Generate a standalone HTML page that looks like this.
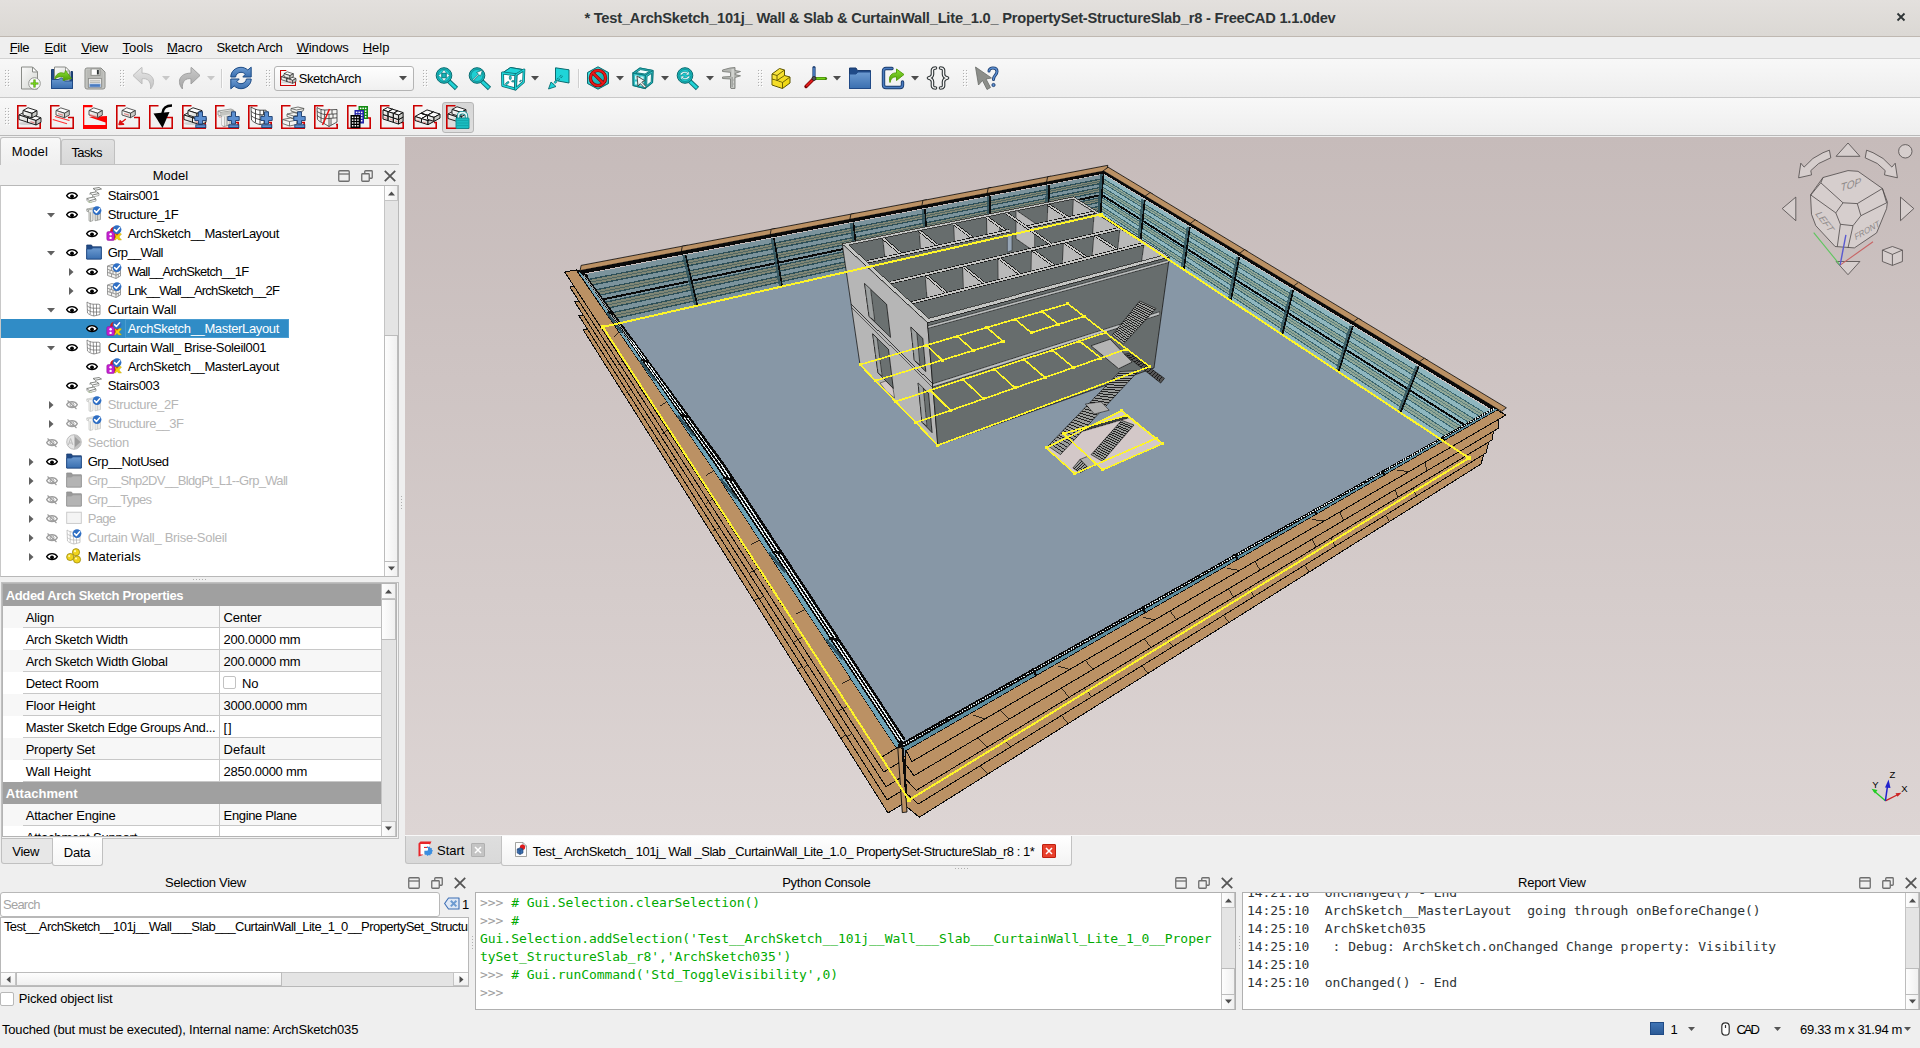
<!DOCTYPE html>
<html><head><meta charset="utf-8"><title>FreeCAD</title>
<style>
*{box-sizing:border-box}
html,body{margin:0;padding:0}
body{width:1920px;height:1048px;overflow:hidden;background:#efefef;position:relative;font-family:"Liberation Sans",sans-serif;font-size:13px;color:#000;letter-spacing:-0.2px}
.a{position:absolute;white-space:nowrap}
.t{position:absolute;white-space:nowrap;line-height:16px;height:16px}
.mono{font-family:"DejaVu Sans Mono","Liberation Mono",monospace;font-size:13px;letter-spacing:-0.045px}
u{text-decoration:underline;text-underline-offset:1px}
svg{position:absolute;overflow:visible}
.dis{color:#b4b4b4}
</style></head><body>
<div class="a" style="left:0;top:0;width:1920px;height:37px;background:linear-gradient(#e3e0dd,#dbd8d4);border-bottom:1px solid #bfb8b1"></div>
<div class="t" style="left:584.4px;top:8px;letter-spacing:-0.222px;font-size:14.67px;font-weight:bold;line-height:20px;height:20px;color:#2e3436;">* Test_ArchSketch_101j_ Wall &amp; Slab &amp; CurtainWall_Lite_1.0_ PropertySet-StructureSlab_r8 - FreeCAD 1.1.0dev</div>
<svg style="left:1896px;top:12px" width="10" height="10"><path d="M1.5 1.5 L8.5 8.5 M8.5 1.5 L1.5 8.5" stroke="#2e3436" stroke-width="1.8" fill="none"/></svg>
<div class="a" style="left:0;top:37px;width:1920px;height:22px;background:#efefef;border-bottom:1px solid #d2d2d2"></div>
<div class="t" style="left:9.8px;top:40px;letter-spacing:-0.384px;"><u>F</u>ile</div>
<div class="t" style="left:44.5px;top:40px;letter-spacing:-0.169px;"><u>E</u>dit</div>
<div class="t" style="left:81.2px;top:40px;letter-spacing:-0.351px;"><u>V</u>iew</div>
<div class="t" style="left:122.5px;top:40px;letter-spacing:0.01px;"><u>T</u>ools</div>
<div class="t" style="left:166.9px;top:40px;letter-spacing:-0.131px;"><u>M</u>acro</div>
<div class="t" style="left:216.5px;top:40px;letter-spacing:-0.317px;">Sketch Arch</div>
<div class="t" style="left:296.7px;top:40px;letter-spacing:-0.125px;"><u>W</u>indows</div>
<div class="t" style="left:362.7px;top:40px;letter-spacing:-0.017px;"><u>H</u>elp</div>
<div class="a" style="left:0;top:59px;width:1920px;height:39px;background:linear-gradient(#f8f8f8,#eeeeee);border-bottom:1px solid #c8c8c8"></div>
<div class="a" style="left:0;top:98px;width:1920px;height:38px;background:linear-gradient(#f8f8f8,#eeeeee);border-bottom:1px solid #b9b9b9"></div>
<svg width="0" height="0" style="left:0;top:0"><defs>
<linearGradient id="gPaper" x1="0" y1="0" x2="1" y2="1"><stop offset="0" stop-color="#fafafa"/><stop offset="1" stop-color="#d4d6d2"/></linearGradient>
<linearGradient id="gBlue" x1="0" y1="0" x2="0" y2="1"><stop offset="0" stop-color="#6d9bd1"/><stop offset="1" stop-color="#3a6fb0"/></linearGradient>
<linearGradient id="gGreen" x1="0" y1="0" x2="0" y2="1"><stop offset="0" stop-color="#8ae234"/><stop offset="1" stop-color="#4e9a06"/></linearGradient>
<linearGradient id="gTeal" x1="0" y1="0" x2="1" y2="1"><stop offset="0" stop-color="#34e0e2"/><stop offset="1" stop-color="#06989a"/></linearGradient>
<linearGradient id="gYel" x1="0" y1="0" x2="1" y2="1"><stop offset="0" stop-color="#fce94f"/><stop offset="1" stop-color="#edd400"/></linearGradient>
<linearGradient id="gGrey" x1="0" y1="0" x2="0" y2="1"><stop offset="0" stop-color="#e6e6e6"/><stop offset="1" stop-color="#c4c4c4"/></linearGradient>
<linearGradient id="gGrey2" x1="0" y1="0" x2="0" y2="1"><stop offset="0" stop-color="#c8c8c8"/><stop offset="1" stop-color="#a6a6a6"/></linearGradient>
<linearGradient id="gBrick" x1="0" y1="0" x2="1" y2="1"><stop offset="0" stop-color="#ffffff"/><stop offset="1" stop-color="#cfd0cc"/></linearGradient>
</defs></svg>
<svg style="left:5px;top:70px" width="5" height="18" viewBox="0 0 5 18"><rect x="0" y="0" width="1" height="1" fill="#b0b0b0"/><rect x="1" y="1" width="1" height="1" fill="#ffffff"/><rect x="3" y="0" width="1" height="1" fill="#b0b0b0"/><rect x="4" y="1" width="1" height="1" fill="#ffffff"/><rect x="0" y="3" width="1" height="1" fill="#b0b0b0"/><rect x="1" y="4" width="1" height="1" fill="#ffffff"/><rect x="3" y="3" width="1" height="1" fill="#b0b0b0"/><rect x="4" y="4" width="1" height="1" fill="#ffffff"/><rect x="0" y="6" width="1" height="1" fill="#b0b0b0"/><rect x="1" y="7" width="1" height="1" fill="#ffffff"/><rect x="3" y="6" width="1" height="1" fill="#b0b0b0"/><rect x="4" y="7" width="1" height="1" fill="#ffffff"/><rect x="0" y="9" width="1" height="1" fill="#b0b0b0"/><rect x="1" y="10" width="1" height="1" fill="#ffffff"/><rect x="3" y="9" width="1" height="1" fill="#b0b0b0"/><rect x="4" y="10" width="1" height="1" fill="#ffffff"/><rect x="0" y="12" width="1" height="1" fill="#b0b0b0"/><rect x="1" y="13" width="1" height="1" fill="#ffffff"/><rect x="3" y="12" width="1" height="1" fill="#b0b0b0"/><rect x="4" y="13" width="1" height="1" fill="#ffffff"/><rect x="0" y="15" width="1" height="1" fill="#b0b0b0"/><rect x="1" y="16" width="1" height="1" fill="#ffffff"/><rect x="3" y="15" width="1" height="1" fill="#b0b0b0"/><rect x="4" y="16" width="1" height="1" fill="#ffffff"/></svg>
<svg style="left:17px;top:66px" width="24" height="24" viewBox="0 0 24 24"><path d="M4.5 1 H15.5 L20.5 6 V23 H4.5 Z" fill="url(#gPaper)" stroke="#8a8c88" stroke-width="1"/>
<path d="M15.5 1 V6 H20.5 Z" fill="#ffffff" stroke="#8a8c88" stroke-width="1" stroke-linejoin="round"/>
<circle cx="17.5" cy="17.5" r="5.8" fill="#fbfbfb" stroke="#8a8c88" stroke-width="0.9"/>
<path d="M17.5 13.6 V21.4 M13.6 17.5 H21.4" stroke="#4e9a06" stroke-width="2.2"/>
<path d="M17.5 14.2 V20.8 M14.2 17.5 H20.8" stroke="#73d216" stroke-width="1"/></svg>
<svg style="left:50px;top:66px" width="24" height="24" viewBox="0 0 24 24"><path d="M1.5 3.5 H5 V14 H21 V5.5 H22.5 V22.5 H1.5 Z" fill="#204a87" stroke="#1b3c6e" stroke-width="1"/>
<path d="M4.5 1 H15.5 L19.5 5 V16 H4.5 Z" fill="url(#gPaper)" stroke="#8a8c88" stroke-width="1"/>
<path d="M15.5 1 V5 H19.5 Z" fill="#fff" stroke="#8a8c88" stroke-width="0.8"/>
<path d="M1.5 13.5 H8 C9.5 13.5 10 12 11.5 12 C13 12 13.5 15 15 15 H22.5 V22.5 H1.5 Z" fill="url(#gBlue)" stroke="#204a87" stroke-width="1"/>
<path d="M5 13 C5.5 8 10 5.5 14.5 7.5 L15.5 4.5 L21.5 12.5 L13 14.5 L13.8 11.5 C11 10 8 10.5 5 13 Z" fill="url(#gGreen)" stroke="#4e9a06" stroke-width="0.8" stroke-linejoin="round"/></svg>
<svg style="left:83px;top:66px" width="24" height="24" viewBox="0 0 24 24"><path d="M4 2 H18 L22 6 V21 Q22 23 20 23 H4 Q2 23 2 21 V4 Q2 2 4 2 Z" fill="#b9bab6" stroke="#8a8c88" stroke-width="1"/>
<path d="M3.2 3.2 H17.6 L20.8 6.4 V21.8 H3.2 Z" fill="none" stroke="#c9cac6" stroke-width="0.8"/>
<rect x="8" y="3" width="9" height="6.5" fill="#d9dad6" stroke="#8a8c88" stroke-width="0.8"/>
<rect x="9" y="3.6" width="4.5" height="5" fill="#fff"/>
<rect x="14" y="4" width="1.8" height="4.4" fill="#2e3436"/>
<rect x="5.5" y="12.5" width="13" height="9" fill="#e9e9e7" stroke="#8a8c88" stroke-width="0.8"/>
<path d="M7 14.8 H17 M7 16.4 H17" stroke="#b0b1ad" stroke-width="0.9"/>
<rect x="6.8" y="18" width="10.4" height="3" fill="#4a7cc0" stroke="#8fb0dd" stroke-width="0.6"/></svg>
<svg style="left:120px;top:70px" width="5" height="18" viewBox="0 0 5 18"><rect x="0" y="0" width="1" height="1" fill="#b0b0b0"/><rect x="1" y="1" width="1" height="1" fill="#ffffff"/><rect x="3" y="0" width="1" height="1" fill="#b0b0b0"/><rect x="4" y="1" width="1" height="1" fill="#ffffff"/><rect x="0" y="3" width="1" height="1" fill="#b0b0b0"/><rect x="1" y="4" width="1" height="1" fill="#ffffff"/><rect x="3" y="3" width="1" height="1" fill="#b0b0b0"/><rect x="4" y="4" width="1" height="1" fill="#ffffff"/><rect x="0" y="6" width="1" height="1" fill="#b0b0b0"/><rect x="1" y="7" width="1" height="1" fill="#ffffff"/><rect x="3" y="6" width="1" height="1" fill="#b0b0b0"/><rect x="4" y="7" width="1" height="1" fill="#ffffff"/><rect x="0" y="9" width="1" height="1" fill="#b0b0b0"/><rect x="1" y="10" width="1" height="1" fill="#ffffff"/><rect x="3" y="9" width="1" height="1" fill="#b0b0b0"/><rect x="4" y="10" width="1" height="1" fill="#ffffff"/><rect x="0" y="12" width="1" height="1" fill="#b0b0b0"/><rect x="1" y="13" width="1" height="1" fill="#ffffff"/><rect x="3" y="12" width="1" height="1" fill="#b0b0b0"/><rect x="4" y="13" width="1" height="1" fill="#ffffff"/><rect x="0" y="15" width="1" height="1" fill="#b0b0b0"/><rect x="1" y="16" width="1" height="1" fill="#ffffff"/><rect x="3" y="15" width="1" height="1" fill="#b0b0b0"/><rect x="4" y="16" width="1" height="1" fill="#ffffff"/></svg>
<svg style="left:132px;top:66px" width="24" height="24" viewBox="0 0 24 24"><path d="M9.5 1.5 L1 9.5 L10 18 V12.8 C15 11.8 19.5 15 18.5 23 C24 17 22.5 7 10 7.2 V1.5 Z" fill="url(#gGrey)" stroke="#bdbdbd" stroke-width="1" stroke-linejoin="round"/></svg>
<svg style="left:162px;top:76px" width="8" height="5" viewBox="0 0 8 5"><path d="M0 0 H8 L4 4.5 Z" fill="#c8c8c8"/></svg>
<svg style="left:177px;top:66px" width="24" height="24" viewBox="0 0 24 24"><path d="M14.5 1.5 L23 9.5 L14 18 V12.8 C9 11.8 4.5 15 5.5 23 C0 17 1.5 7 14 7.2 V1.5 Z" fill="url(#gGrey2)" stroke="#a0a0a0" stroke-width="1" stroke-linejoin="round"/></svg>
<svg style="left:207px;top:76px" width="8" height="5" viewBox="0 0 8 5"><path d="M0 0 H8 L4 4.5 Z" fill="#c8c8c8"/></svg>
<div class="a" style="left:221px;top:69px;width:1px;height:19px;background:#cfcfcf"></div><div class="a" style="left:222px;top:69px;width:1px;height:19px;background:#fbfbfb"></div>
<svg style="left:229px;top:66px" width="24" height="24" viewBox="0 0 24 24"><path d="M1.8 11 C1.8 5.5 6.5 1.3 12 1.3 C14.6 1.3 17 2.4 18.8 4 L22.2 1.2 V11 H13.8 L16.3 8.2 C15.2 7 13.6 6.3 12 6.3 C9 6.3 6.9 8.4 6.6 11 Z" fill="url(#gBlue)" stroke="#1b4a85" stroke-width="1" stroke-linejoin="round"/>
<path d="M22.2 13 C22.2 18.5 17.5 22.7 12 22.7 C9.4 22.7 7 21.6 5.2 20 L1.8 22.8 V13 H10.2 L7.7 15.8 C8.8 17 10.4 17.7 12 17.7 C15 17.7 17.1 15.6 17.4 13 Z" fill="url(#gBlue)" stroke="#1b4a85" stroke-width="1" stroke-linejoin="round"/></svg>
<svg style="left:266px;top:70px" width="5" height="18" viewBox="0 0 5 18"><rect x="0" y="0" width="1" height="1" fill="#b0b0b0"/><rect x="1" y="1" width="1" height="1" fill="#ffffff"/><rect x="3" y="0" width="1" height="1" fill="#b0b0b0"/><rect x="4" y="1" width="1" height="1" fill="#ffffff"/><rect x="0" y="3" width="1" height="1" fill="#b0b0b0"/><rect x="1" y="4" width="1" height="1" fill="#ffffff"/><rect x="3" y="3" width="1" height="1" fill="#b0b0b0"/><rect x="4" y="4" width="1" height="1" fill="#ffffff"/><rect x="0" y="6" width="1" height="1" fill="#b0b0b0"/><rect x="1" y="7" width="1" height="1" fill="#ffffff"/><rect x="3" y="6" width="1" height="1" fill="#b0b0b0"/><rect x="4" y="7" width="1" height="1" fill="#ffffff"/><rect x="0" y="9" width="1" height="1" fill="#b0b0b0"/><rect x="1" y="10" width="1" height="1" fill="#ffffff"/><rect x="3" y="9" width="1" height="1" fill="#b0b0b0"/><rect x="4" y="10" width="1" height="1" fill="#ffffff"/><rect x="0" y="12" width="1" height="1" fill="#b0b0b0"/><rect x="1" y="13" width="1" height="1" fill="#ffffff"/><rect x="3" y="12" width="1" height="1" fill="#b0b0b0"/><rect x="4" y="13" width="1" height="1" fill="#ffffff"/><rect x="0" y="15" width="1" height="1" fill="#b0b0b0"/><rect x="1" y="16" width="1" height="1" fill="#ffffff"/><rect x="3" y="15" width="1" height="1" fill="#b0b0b0"/><rect x="4" y="16" width="1" height="1" fill="#ffffff"/></svg>
<div class="a" style="left:274px;top:66px;width:140px;height:25px;border:1px solid #b4b4b4;border-radius:3px;background:linear-gradient(#fefefe,#f0f0f0)"></div>
<div class="t" style="left:298.7px;top:71px;letter-spacing:-0.42px;">SketchArch</div>
<svg style="left:398.5px;top:76px" width="8" height="5" viewBox="0 0 8 5"><path d="M0 0 H8 L4 4.5 Z" fill="#4d4d4d"/></svg>
<svg style="left:423px;top:70px" width="5" height="18" viewBox="0 0 5 18"><rect x="0" y="0" width="1" height="1" fill="#b0b0b0"/><rect x="1" y="1" width="1" height="1" fill="#ffffff"/><rect x="3" y="0" width="1" height="1" fill="#b0b0b0"/><rect x="4" y="1" width="1" height="1" fill="#ffffff"/><rect x="0" y="3" width="1" height="1" fill="#b0b0b0"/><rect x="1" y="4" width="1" height="1" fill="#ffffff"/><rect x="3" y="3" width="1" height="1" fill="#b0b0b0"/><rect x="4" y="4" width="1" height="1" fill="#ffffff"/><rect x="0" y="6" width="1" height="1" fill="#b0b0b0"/><rect x="1" y="7" width="1" height="1" fill="#ffffff"/><rect x="3" y="6" width="1" height="1" fill="#b0b0b0"/><rect x="4" y="7" width="1" height="1" fill="#ffffff"/><rect x="0" y="9" width="1" height="1" fill="#b0b0b0"/><rect x="1" y="10" width="1" height="1" fill="#ffffff"/><rect x="3" y="9" width="1" height="1" fill="#b0b0b0"/><rect x="4" y="10" width="1" height="1" fill="#ffffff"/><rect x="0" y="12" width="1" height="1" fill="#b0b0b0"/><rect x="1" y="13" width="1" height="1" fill="#ffffff"/><rect x="3" y="12" width="1" height="1" fill="#b0b0b0"/><rect x="4" y="13" width="1" height="1" fill="#ffffff"/><rect x="0" y="15" width="1" height="1" fill="#b0b0b0"/><rect x="1" y="16" width="1" height="1" fill="#ffffff"/><rect x="3" y="15" width="1" height="1" fill="#b0b0b0"/><rect x="4" y="16" width="1" height="1" fill="#ffffff"/></svg>
<svg style="left:434px;top:66px" width="24" height="24" viewBox="0 0 24 24"><path d="M14.8 15.2 L22.5 22.5" stroke="#0b6b70" stroke-width="4.6" stroke-linecap="butt"/>
<path d="M15 15.4 L22 22" stroke="#22d3d6" stroke-width="2.8" stroke-linecap="butt"/>
<circle cx="10" cy="9.5" r="7.8" fill="#16b4b8" stroke="#0b6b70" stroke-width="1"/>
<circle cx="10" cy="9.5" r="6" fill="#1fcfd3" stroke="#0e8b90" stroke-width="0.8"/><path d="M10 3.8 L12.4 7 H7.6 Z M10 15.2 L12.4 12 H7.6 Z M4.3 9.5 L7.5 7.1 V11.9 Z M15.7 9.5 L12.5 7.1 V11.9 Z" fill="#fff" stroke="#0b6b70" stroke-width="0.5"/>
<rect x="8" y="7.5" width="4" height="4" fill="#16b4b8" stroke="#0b6b70" stroke-width="0.5"/></svg>
<svg style="left:467px;top:66px" width="24" height="24" viewBox="0 0 24 24"><path d="M14.8 15.2 L22.5 22.5" stroke="#0b6b70" stroke-width="4.6" stroke-linecap="butt"/>
<path d="M15 15.4 L22 22" stroke="#22d3d6" stroke-width="2.8" stroke-linecap="butt"/>
<circle cx="10" cy="9.5" r="7.8" fill="#16b4b8" stroke="#0b6b70" stroke-width="1"/>
<circle cx="10" cy="9.5" r="6" fill="#1fcfd3" stroke="#0e8b90" stroke-width="0.8"/><path d="M5.5 14 L11.5 8 L9.5 6.5 L15.5 4 L13.5 10.2 L12.3 8.8 L6.3 14.8 Z" fill="#fff" stroke="#0b6b70" stroke-width="0.7" stroke-linejoin="round"/></svg>
<svg style="left:501px;top:66px" width="24" height="24" viewBox="0 0 24 24"><path d="M1.5 7 L9.5 1.5 L23 3.8 L22.5 16 L14.5 23 L1.8 19.5 Z" fill="#ffffff" stroke="#0b6b70" stroke-width="1" stroke-linejoin="round"/>
<path d="M1.5 7 L9.5 1.5 L23 3.8 L15 8.8 Z" fill="#1fd5d8" stroke="#0b6b70" stroke-width="1" stroke-linejoin="round"/>
<path d="M1.5 7 L15 8.8 L14.5 23 L1.8 19.5 Z" fill="none" stroke="#0b6b70" stroke-width="3" stroke-linejoin="round"/>
<path d="M1.5 7 L15 8.8 L14.5 23 L1.8 19.5 Z" fill="none" stroke="#1fd5d8" stroke-width="1.5" stroke-linejoin="round"/>
<path d="M15 8.8 L23 3.8 L22.5 16 L14.5 23 Z" fill="none" stroke="#0b6b70" stroke-width="2.6" stroke-linejoin="round"/>
<path d="M15 8.8 L23 3.8 L22.5 16 L14.5 23 Z" fill="none" stroke="#1fd5d8" stroke-width="1.2" stroke-linejoin="round"/>
<ellipse cx="9.3" cy="11.8" rx="1" ry="2" fill="#1fd5d8" stroke="#0b6b70" stroke-width="0.7"/>
<ellipse cx="6.3" cy="17" rx="2" ry="0.9" transform="rotate(-35 6.3 17)" fill="#1fd5d8" stroke="#0b6b70" stroke-width="0.7"/>
<ellipse cx="12" cy="15.3" rx="1.5" ry="0.7" fill="#1fd5d8" stroke="#0b6b70" stroke-width="0.7"/>
<ellipse cx="19.5" cy="15" rx="1.2" ry="0.6" transform="rotate(-35 19.5 15)" fill="#1fd5d8" stroke="#0b6b70" stroke-width="0.6"/></svg>
<svg style="left:531px;top:76px" width="8" height="5" viewBox="0 0 8 5"><path d="M0 0 H8 L4 4.5 Z" fill="#4d4d4d"/></svg>
<svg style="left:547px;top:66px" width="24" height="24" viewBox="0 0 24 24"><path d="M8.5 1.8 L22 3.8 V17 L8.5 14.5 Z" fill="#1fd5d8" stroke="#0b6b70" stroke-width="1" stroke-linejoin="round"/>
<path d="M15 9.5 L6 18.5" stroke="#0b6b70" stroke-width="2.4" stroke-dasharray="2.6 1.4"/>
<path d="M15 9.5 L6 18.5" stroke="#1fd5d8" stroke-width="1.1" stroke-dasharray="2.6 1.4"/>
<path d="M1.5 23 L4 16 L9 20.5 Z" fill="#1fd5d8" stroke="#0b6b70" stroke-width="0.9" stroke-linejoin="round"/></svg>
<div class="a" style="left:578px;top:69px;width:1px;height:19px;background:#cfcfcf"></div><div class="a" style="left:579px;top:69px;width:1px;height:19px;background:#fbfbfb"></div>
<svg style="left:586px;top:66px" width="24" height="24" viewBox="0 0 24 24"><path d="M12 0.8 L22.5 6.5 V17.5 L12 23.2 L1.5 17.5 V6.5 Z" fill="url(#gTeal)" stroke="#0b6b70" stroke-width="1" stroke-linejoin="round"/>
<path d="M12 2.5 L21 7.3 V16.7 L12 21.5 L3 16.7 V7.3 Z" fill="none" stroke="#5eeaec" stroke-width="0.7"/>
<circle cx="12" cy="12" r="7.6" fill="none" stroke="#7a0000" stroke-width="3.3"/>
<path d="M6.8 6.8 L17.2 17.2" stroke="#7a0000" stroke-width="3.3"/>
<circle cx="12" cy="12" r="7.6" fill="none" stroke="#e81818" stroke-width="2.1"/>
<path d="M6.8 6.8 L17.2 17.2" stroke="#e81818" stroke-width="2.1"/></svg>
<svg style="left:616px;top:76px" width="8" height="5" viewBox="0 0 8 5"><path d="M0 0 H8 L4 4.5 Z" fill="#4d4d4d"/></svg>
<svg style="left:631px;top:66px" width="24" height="24" viewBox="0 0 24 24"><path d="M2 7 L9 2 L22 4.5 L21.5 16.5 L14 22.5 L2.2 19.5 Z" fill="#f4ffff" stroke="#0a767b" stroke-width="1.2" stroke-linejoin="round"/>
<path d="M2 7 L14.5 9.2 L14 22.5 L2.2 19.5 Z" fill="#35c3c7" stroke="#0a767b" stroke-width="1.2"/>
<path d="M2 7 L9 2 L22 4.5 L14.5 9.2 Z M4.8 6.6 L9.6 3.6 L18.6 5.2 L14 8 Z" fill="#35c3c7" fill-rule="evenodd" stroke="#0a767b" stroke-width="0.9"/>
<path d="M14.5 9.2 L22 4.5 L21.5 16.5 L14 22.5 Z M16 10.4 L15.7 19.6 L20.2 15.8 L20.5 7.4 Z" fill="#35c3c7" fill-rule="evenodd" stroke="#0a767b" stroke-width="0.9"/>
<path d="M4 9.6 H7.6 V13.4 H4 Z M9.4 10.4 H12.6 V13.4 H9.4 Z M4 15.6 H6.6 V18.6 H4 Z M9.6 16 H12.4 V20 H9.6 Z" fill="#c9f6f7"/>
<path d="M6 10 L7 20 L9.3 17.6 L13.5 22 L15 20.5 L10.8 16.2 L13.6 14.6 Z" fill="#f4f4f4" stroke="#3c3e3b" stroke-width="0.9" stroke-linejoin="round"/></svg>
<svg style="left:661px;top:76px" width="8" height="5" viewBox="0 0 8 5"><path d="M0 0 H8 L4 4.5 Z" fill="#4d4d4d"/></svg>
<svg style="left:675px;top:66px" width="24" height="24" viewBox="0 0 24 24"><path d="M14.8 15.2 L22.5 22.5" stroke="#0b6b70" stroke-width="4.6" stroke-linecap="butt"/>
<path d="M15 15.4 L22 22" stroke="#22d3d6" stroke-width="2.8" stroke-linecap="butt"/>
<circle cx="10" cy="9.5" r="7.8" fill="#16b4b8" stroke="#0b6b70" stroke-width="1"/>
<circle cx="10" cy="9.5" r="6" fill="#1fcfd3" stroke="#0e8b90" stroke-width="0.8"/><path d="M5 9 C5.5 5.5 10 4.5 12.5 6.5 L14 5 V9 H10.5 L11.8 7.6 C10 6.6 7.6 7 7 9 Z M15 10 C14.5 13.5 10 14.5 7.5 12.5 L6 14 V10 H9.5 L8.2 11.4 C10 12.4 12.4 12 13 10 Z" fill="#e8ffff" stroke="#0b6b70" stroke-width="0.5"/></svg>
<svg style="left:706px;top:76px" width="8" height="5" viewBox="0 0 8 5"><path d="M0 0 H8 L4 4.5 Z" fill="#4d4d4d"/></svg>
<svg style="left:721px;top:66px" width="24" height="24" viewBox="0 0 24 24"><path d="M1.5 4 L9 2 L14 1.5 V4.5 L19.5 5.5 L14 7.5 V8.6 L19.5 9.8 L14 11.5 V22.5 H10 L9.5 22 V13 L1.5 12.5 V11 L9.5 10.5 V6.3 L1.5 5.5 Z" fill="#b5b7b3" stroke="#7d7f7b" stroke-width="0.9" stroke-linejoin="round"/>
<path d="M10.5 3 H13 V21.5 H10.5 Z" fill="#d0d2ce"/>
<path d="M10.5 12 H12 M10.5 14 H12.5 M10.5 16 H12 M10.5 18 H12.5 M10.5 20 H12" stroke="#555753" stroke-width="0.7"/></svg>
<svg style="left:758px;top:70px" width="5" height="18" viewBox="0 0 5 18"><rect x="0" y="0" width="1" height="1" fill="#b0b0b0"/><rect x="1" y="1" width="1" height="1" fill="#ffffff"/><rect x="3" y="0" width="1" height="1" fill="#b0b0b0"/><rect x="4" y="1" width="1" height="1" fill="#ffffff"/><rect x="0" y="3" width="1" height="1" fill="#b0b0b0"/><rect x="1" y="4" width="1" height="1" fill="#ffffff"/><rect x="3" y="3" width="1" height="1" fill="#b0b0b0"/><rect x="4" y="4" width="1" height="1" fill="#ffffff"/><rect x="0" y="6" width="1" height="1" fill="#b0b0b0"/><rect x="1" y="7" width="1" height="1" fill="#ffffff"/><rect x="3" y="6" width="1" height="1" fill="#b0b0b0"/><rect x="4" y="7" width="1" height="1" fill="#ffffff"/><rect x="0" y="9" width="1" height="1" fill="#b0b0b0"/><rect x="1" y="10" width="1" height="1" fill="#ffffff"/><rect x="3" y="9" width="1" height="1" fill="#b0b0b0"/><rect x="4" y="10" width="1" height="1" fill="#ffffff"/><rect x="0" y="12" width="1" height="1" fill="#b0b0b0"/><rect x="1" y="13" width="1" height="1" fill="#ffffff"/><rect x="3" y="12" width="1" height="1" fill="#b0b0b0"/><rect x="4" y="13" width="1" height="1" fill="#ffffff"/><rect x="0" y="15" width="1" height="1" fill="#b0b0b0"/><rect x="1" y="16" width="1" height="1" fill="#ffffff"/><rect x="3" y="15" width="1" height="1" fill="#b0b0b0"/><rect x="4" y="16" width="1" height="1" fill="#ffffff"/></svg>
<svg style="left:770px;top:66px" width="24" height="24" viewBox="0 0 24 24"><path d="M2 8 L9.5 2.5 L14.5 4 V9.5 L20 11 V17 L12.5 22.5 L2 19 Z" fill="url(#gYel)" stroke="#5e5600" stroke-width="1" stroke-linejoin="round"/>
<path d="M2 8 L7 9.5 L14.5 4 M7 9.5 V14.5 L2 13 M7 14.5 L12.5 16.5 L20 11 M12.5 16.5 V22.5 M7 14.5 L14.5 9.5" fill="none" stroke="#5e5600" stroke-width="0.9" stroke-linejoin="round"/>
<path d="M2.8 13.8 L11.8 16.8 V21.4 L2.8 18.4 Z" fill="#f5dc28" opacity="0.8"/></svg>
<svg style="left:803px;top:66px" width="24" height="24" viewBox="0 0 24 24"><path d="M11 12.5 L3 20.5" stroke="#7a0000" stroke-width="3.4" stroke-linecap="round"/><path d="M11 12.5 L3.2 20.3" stroke="#e01b1b" stroke-width="2"/>
<path d="M11 12.5 H22.5" stroke="#3d7a06" stroke-width="3.2" stroke-linecap="round"/><path d="M11 12.5 H22.3" stroke="#73d216" stroke-width="1.8"/>
<path d="M11 12.5 V1.5" stroke="#1b3c6e" stroke-width="3.2" stroke-linecap="round"/><path d="M11 12.5 V1.7" stroke="#4a7cc0" stroke-width="1.8"/>
<circle cx="11" cy="12.5" r="2" fill="#555" stroke="#222" stroke-width="0.8"/></svg>
<svg style="left:833px;top:76px" width="8" height="5" viewBox="0 0 8 5"><path d="M0 0 H8 L4 4.5 Z" fill="#4d4d4d"/></svg>
<svg style="left:848px;top:66px" width="24" height="24" viewBox="0 0 24 24"><path d="M1.5 2 H8 L9.5 4.5 H22.5 V22.5 H1.5 Z" fill="#204a87" stroke="#1b3c6e" stroke-width="1" stroke-linejoin="round"/>
<path d="M1.5 8 H8 L9.8 6 H22.5 V22.5 H1.5 Z" fill="url(#gBlue)" stroke="#204a87" stroke-width="1" stroke-linejoin="round"/></svg>
<svg style="left:881px;top:66px" width="24" height="24" viewBox="0 0 24 24"><path d="M11 2.5 H5 Q2.5 2.5 2.5 5 V19 Q2.5 21.5 5 21.5 H19 Q21.5 21.5 21.5 19 V16" fill="none" stroke="#1b3c6e" stroke-width="3.4" stroke-linecap="round"/>
<path d="M11 2.5 H5 Q2.5 2.5 2.5 5 V19 Q2.5 21.5 5 21.5 H19 Q21.5 21.5 21.5 19 V16" fill="none" stroke="#4a7cc0" stroke-width="1.6" stroke-linecap="round"/>
<path d="M9 16.5 C7 10 11 6.5 15.5 7 V3 L23 8.5 L15.5 14.5 V11 C12.5 10.5 10 12 9 16.5 Z" fill="url(#gGreen)" stroke="#4e9a06" stroke-width="0.9" stroke-linejoin="round"/></svg>
<svg style="left:911px;top:76px" width="8" height="5" viewBox="0 0 8 5"><path d="M0 0 H8 L4 4.5 Z" fill="#4d4d4d"/></svg>
<svg style="left:926px;top:66px" width="24" height="24" viewBox="0 0 24 24"><path d="M9.5 2 C5.5 2 6.5 5 6.5 8 C6.5 10.5 5 11.5 2.5 12 C5 12.5 6.5 13.5 6.5 16 C6.5 19 5.5 22 9.5 22" fill="none" stroke="#2e3436" stroke-width="3.6" stroke-linecap="round" stroke-linejoin="round"/>
<path d="M9.5 2 C5.5 2 6.5 5 6.5 8 C6.5 10.5 5 11.5 2.5 12 C5 12.5 6.5 13.5 6.5 16 C6.5 19 5.5 22 9.5 22" fill="none" stroke="#f4f4f4" stroke-width="1.4" stroke-linecap="round" stroke-linejoin="round"/>
<path d="M14.5 2 C18.5 2 17.5 5 17.5 8 C17.5 10.5 19 11.5 21.5 12 C19 12.5 17.5 13.5 17.5 16 C17.5 19 18.5 22 14.5 22" fill="none" stroke="#2e3436" stroke-width="3.6" stroke-linecap="round" stroke-linejoin="round"/>
<path d="M14.5 2 C18.5 2 17.5 5 17.5 8 C17.5 10.5 19 11.5 21.5 12 C19 12.5 17.5 13.5 17.5 16 C17.5 19 18.5 22 14.5 22" fill="none" stroke="#f4f4f4" stroke-width="1.4" stroke-linecap="round" stroke-linejoin="round"/></svg>
<svg style="left:963px;top:70px" width="5" height="18" viewBox="0 0 5 18"><rect x="0" y="0" width="1" height="1" fill="#b0b0b0"/><rect x="1" y="1" width="1" height="1" fill="#ffffff"/><rect x="3" y="0" width="1" height="1" fill="#b0b0b0"/><rect x="4" y="1" width="1" height="1" fill="#ffffff"/><rect x="0" y="3" width="1" height="1" fill="#b0b0b0"/><rect x="1" y="4" width="1" height="1" fill="#ffffff"/><rect x="3" y="3" width="1" height="1" fill="#b0b0b0"/><rect x="4" y="4" width="1" height="1" fill="#ffffff"/><rect x="0" y="6" width="1" height="1" fill="#b0b0b0"/><rect x="1" y="7" width="1" height="1" fill="#ffffff"/><rect x="3" y="6" width="1" height="1" fill="#b0b0b0"/><rect x="4" y="7" width="1" height="1" fill="#ffffff"/><rect x="0" y="9" width="1" height="1" fill="#b0b0b0"/><rect x="1" y="10" width="1" height="1" fill="#ffffff"/><rect x="3" y="9" width="1" height="1" fill="#b0b0b0"/><rect x="4" y="10" width="1" height="1" fill="#ffffff"/><rect x="0" y="12" width="1" height="1" fill="#b0b0b0"/><rect x="1" y="13" width="1" height="1" fill="#ffffff"/><rect x="3" y="12" width="1" height="1" fill="#b0b0b0"/><rect x="4" y="13" width="1" height="1" fill="#ffffff"/><rect x="0" y="15" width="1" height="1" fill="#b0b0b0"/><rect x="1" y="16" width="1" height="1" fill="#ffffff"/><rect x="3" y="15" width="1" height="1" fill="#b0b0b0"/><rect x="4" y="16" width="1" height="1" fill="#ffffff"/></svg>
<svg style="left:974px;top:66px" width="24" height="24" viewBox="0 0 24 24"><path d="M1.5 1 L4.5 19 L8.5 14.5 L13 23.5 L16.5 21.5 L12 13 L17.5 12 Z" fill="#8c8e8a" stroke="#6a6c68" stroke-width="0.8" stroke-linejoin="round"/>
<path d="M15 5 C15 1 23 1 23 5.5 C23 9 19.5 9 19.5 13.5" fill="none" stroke="#1b3c6e" stroke-width="3" stroke-linecap="round"/>
<path d="M15 5 C15 1 23 1 23 5.5 C23 9 19.5 9 19.5 13.5" fill="none" stroke="#5c8fd0" stroke-width="1.4" stroke-linecap="round"/>
<circle cx="19.5" cy="19" r="1.6" fill="#5c8fd0" stroke="#1b3c6e" stroke-width="0.9"/></svg>
<svg style="left:5px;top:108px" width="5" height="18" viewBox="0 0 5 18"><rect x="0" y="0" width="1" height="1" fill="#b0b0b0"/><rect x="1" y="1" width="1" height="1" fill="#ffffff"/><rect x="3" y="0" width="1" height="1" fill="#b0b0b0"/><rect x="4" y="1" width="1" height="1" fill="#ffffff"/><rect x="0" y="3" width="1" height="1" fill="#b0b0b0"/><rect x="1" y="4" width="1" height="1" fill="#ffffff"/><rect x="3" y="3" width="1" height="1" fill="#b0b0b0"/><rect x="4" y="4" width="1" height="1" fill="#ffffff"/><rect x="0" y="6" width="1" height="1" fill="#b0b0b0"/><rect x="1" y="7" width="1" height="1" fill="#ffffff"/><rect x="3" y="6" width="1" height="1" fill="#b0b0b0"/><rect x="4" y="7" width="1" height="1" fill="#ffffff"/><rect x="0" y="9" width="1" height="1" fill="#b0b0b0"/><rect x="1" y="10" width="1" height="1" fill="#ffffff"/><rect x="3" y="9" width="1" height="1" fill="#b0b0b0"/><rect x="4" y="10" width="1" height="1" fill="#ffffff"/><rect x="0" y="12" width="1" height="1" fill="#b0b0b0"/><rect x="1" y="13" width="1" height="1" fill="#ffffff"/><rect x="3" y="12" width="1" height="1" fill="#b0b0b0"/><rect x="4" y="13" width="1" height="1" fill="#ffffff"/><rect x="0" y="15" width="1" height="1" fill="#b0b0b0"/><rect x="1" y="16" width="1" height="1" fill="#ffffff"/><rect x="3" y="15" width="1" height="1" fill="#b0b0b0"/><rect x="4" y="16" width="1" height="1" fill="#ffffff"/></svg>
<div class="a" style="left:442px;top:102px;width:32px;height:31px;border:1px solid #b6b6b6;border-radius:3px;background:linear-gradient(#d6d6d6,#dedede)"></div>
<svg style="left:17px;top:105px" width="24" height="24" viewBox="0 0 24 24"><path d="M9.5 0.8 H0.8 V23.2 H23.2 V17.5 H20" fill="none" stroke="#cc0000" stroke-width="1.6" stroke-linejoin="miter"/><path d="M2 10 L10.5 12.72 L15.5 9.97 L7 7.25 Z" fill="#fcfcfc" stroke="#111" stroke-width="0.9" stroke-linejoin="round"/><path d="M2 10 L10.5 12.72 V17.22 L2 14.5 Z" fill="url(#gBrick)" stroke="#111" stroke-width="0.9" stroke-linejoin="round"/><path d="M10.5 12.72 L15.5 9.97 V14.47 L10.5 17.22 Z" fill="#c9cac6" stroke="#111" stroke-width="0.9" stroke-linejoin="round"/><path d="M10.5 12.8 L19.0 15.520000000000001 L24.0 12.770000000000001 L15.5 10.05 Z" fill="#fcfcfc" stroke="#111" stroke-width="0.9" stroke-linejoin="round"/><path d="M10.5 12.8 L19.0 15.520000000000001 V20.020000000000003 L10.5 17.3 Z" fill="url(#gBrick)" stroke="#111" stroke-width="0.9" stroke-linejoin="round"/><path d="M19.0 15.520000000000001 L24.0 12.770000000000001 V17.270000000000003 L19.0 20.020000000000003 Z" fill="#c9cac6" stroke="#111" stroke-width="0.9" stroke-linejoin="round"/><path d="M6 5.5 L15 8.379999999999999 L20 5.629999999999999 L11 2.75 Z" fill="#fcfcfc" stroke="#111" stroke-width="0.9" stroke-linejoin="round"/><path d="M6 5.5 L15 8.379999999999999 V12.879999999999999 L6 10.0 Z" fill="url(#gBrick)" stroke="#111" stroke-width="0.9" stroke-linejoin="round"/><path d="M15 8.379999999999999 L20 5.629999999999999 V10.129999999999999 L15 12.879999999999999 Z" fill="#c9cac6" stroke="#111" stroke-width="0.9" stroke-linejoin="round"/><path d="M13.5 16.6 L17.5 17.9" stroke="#e05050" stroke-width="0.7"/><ellipse cx="9" cy="18.5" rx="7" ry="1.6" fill="#000" opacity="0.12"/></svg>
<svg style="left:50px;top:105px" width="24" height="24" viewBox="0 0 24 24"><path d="M9.5 0.8 H0.8 V23.2 H23.2 V12.5 H18" fill="none" stroke="#cc0000" stroke-width="1.6" stroke-linejoin="miter"/><path d="M5 11.5 L19.5 15.5 M2.8 14.5 L17 18.8" stroke="#ff3030" stroke-width="1.1"/><path d="M6 5.5 L14.5 8.22 L19.3 5.58 L10.8 2.86 Z" fill="#fcfcfc" stroke="#333" stroke-width="0.8" stroke-linejoin="round"/><path d="M6 5.5 L14.5 8.22 V12.72 L6 10.0 Z" fill="url(#gBrick)" stroke="#333" stroke-width="0.8" stroke-linejoin="round"/><path d="M14.5 8.22 L19.3 5.58 V10.08 L14.5 12.72 Z" fill="#c9cac6" stroke="#333" stroke-width="0.8" stroke-linejoin="round"/><path d="M8 8.6 L13 10.2" stroke="#e05050" stroke-width="0.7"/></svg>
<svg style="left:83px;top:105px" width="24" height="24" viewBox="0 0 24 24"><path d="M9.5 0 H0 V24 H24 V11 L6 12 L22.5 17.5 V20 H1.3 V2.2 H9.5 Z" fill="#ff0000"/><path d="M6 5.5 L14.5 8.22 L19.3 5.58 L10.8 2.86 Z" fill="#fcfcfc" stroke="#333" stroke-width="0.8" stroke-linejoin="round"/><path d="M6 5.5 L14.5 8.22 V12.72 L6 10.0 Z" fill="url(#gBrick)" stroke="#333" stroke-width="0.8" stroke-linejoin="round"/><path d="M14.5 8.22 L19.3 5.58 V10.08 L14.5 12.72 Z" fill="#c9cac6" stroke="#333" stroke-width="0.8" stroke-linejoin="round"/><path d="M7 9 L14.5 11.4 V13.6 L7 11.2 Z" fill="#ff6060" opacity="0.6"/></svg>
<svg style="left:116px;top:105px" width="24" height="24" viewBox="0 0 24 24"><path d="M9.5 0.8 H0.8 V23.2 H23.2 V12.5 H18" fill="none" stroke="#cc0000" stroke-width="1.6" stroke-linejoin="miter"/><path d="M6 5.5 L14.5 8.22 L19.3 5.58 L10.8 2.86 Z" fill="#fcfcfc" stroke="#333" stroke-width="0.8" stroke-linejoin="round"/><path d="M6 5.5 L14.5 8.22 V12.72 L6 10.0 Z" fill="url(#gBrick)" stroke="#333" stroke-width="0.8" stroke-linejoin="round"/><path d="M14.5 8.22 L19.3 5.58 V10.08 L14.5 12.72 Z" fill="#c9cac6" stroke="#333" stroke-width="0.8" stroke-linejoin="round"/><path d="M8 8.6 L13 10.2" stroke="#e05050" stroke-width="0.7"/><path d="M9.8 14 L3 19.5 M3 19.5 L4.2 15.8 L7.6 19.2 Z" fill="#dd1111" stroke="#dd1111" stroke-width="1.4" stroke-linejoin="round"/></svg>
<svg style="left:149px;top:105px" width="24" height="24" viewBox="0 0 24 24"><path d="M9.5 0.8 H0.8 V23.2 H23.2 V12.5 H18" fill="none" stroke="#cc0000" stroke-width="1.6" stroke-linejoin="miter"/><path d="M23 0.5 C17 0.5 14 3 13.5 8" fill="none" stroke="#000" stroke-width="2.4"/><path d="M4.5 8.5 L20.5 7 L13.5 23 Z" fill="#000"/></svg>
<svg style="left:182px;top:105px" width="24" height="24" viewBox="0 0 24 24"><path d="M9.5 0.8 H0.8 V23.2 H23.2 V17.5 H21" fill="none" stroke="#cc0000" stroke-width="1.6" stroke-linejoin="miter"/><path d="M2 10 L10.5 12.72 L15.5 9.97 L7 7.25 Z" fill="#fcfcfc" stroke="#111" stroke-width="0.9" stroke-linejoin="round"/><path d="M2 10 L10.5 12.72 V17.22 L2 14.5 Z" fill="url(#gBrick)" stroke="#111" stroke-width="0.9" stroke-linejoin="round"/><path d="M10.5 12.72 L15.5 9.97 V14.47 L10.5 17.22 Z" fill="#c9cac6" stroke="#111" stroke-width="0.9" stroke-linejoin="round"/><path d="M10.5 12.8 L19.0 15.520000000000001 L24.0 12.770000000000001 L15.5 10.05 Z" fill="#fcfcfc" stroke="#111" stroke-width="0.9" stroke-linejoin="round"/><path d="M10.5 12.8 L19.0 15.520000000000001 V20.020000000000003 L10.5 17.3 Z" fill="url(#gBrick)" stroke="#111" stroke-width="0.9" stroke-linejoin="round"/><path d="M19.0 15.520000000000001 L24.0 12.770000000000001 V17.270000000000003 L19.0 20.020000000000003 Z" fill="#c9cac6" stroke="#111" stroke-width="0.9" stroke-linejoin="round"/><path d="M6 5.5 L15 8.379999999999999 L20 5.629999999999999 L11 2.75 Z" fill="#fcfcfc" stroke="#111" stroke-width="0.9" stroke-linejoin="round"/><path d="M6 5.5 L15 8.379999999999999 V12.879999999999999 L6 10.0 Z" fill="url(#gBrick)" stroke="#111" stroke-width="0.9" stroke-linejoin="round"/><path d="M15 8.379999999999999 L20 5.629999999999999 V10.129999999999999 L15 12.879999999999999 Z" fill="#c9cac6" stroke="#111" stroke-width="0.9" stroke-linejoin="round"/><path d="M13.5 16.6 L17.5 17.9" stroke="#e05050" stroke-width="0.7"/><ellipse cx="9" cy="18.5" rx="7" ry="1.6" fill="#000" opacity="0.12"/><path d="M16.5 6.8 H20.5 V11.5 H24.2 V15.5 H20.5 V19 H16.5 V15.5 H12.8 V11.5 H16.5 Z" fill="#5c8fd0" stroke="#1b3c6e" stroke-width="0.9"/>
<rect x="13.8" y="19.8" width="10" height="2.8" fill="#5c8fd0" stroke="#1b3c6e" stroke-width="0.9"/></svg>
<svg style="left:215px;top:105px" width="24" height="24" viewBox="0 0 24 24"><path d="M9.5 0.8 H0.8 V23.2 H23.2 V17.5 H21" fill="none" stroke="#cc0000" stroke-width="1.6" stroke-linejoin="miter"/><path d="M3 6 L16 4 L19 5.5 V9 L15 10 V20 L9 21.5 L7 20.5 V11.5 L3 10 Z" fill="#e4e5e1" stroke="#8a8c88" stroke-width="0.8" stroke-linejoin="round"/>
<path d="M3 6 L6 7.5 L19 5.5 M6 7.5 V11 M9 11.5 V21.5 M12 11 V21" fill="none" stroke="#8a8c88" stroke-width="0.8"/><path d="M6.2 7.6 L18.8 5.7 V8.8 L6.2 10.8Z" fill="#c4c5c1"/><path d="M7.2 11.6 H8.8 V21 L7.2 20.3Z" fill="#fff"/>
<path d="M4 11.5 L5 12.5 M13.5 15 L14.5 16" stroke="#e02020" stroke-width="1"/><path d="M16.5 6.8 H20.5 V11.5 H24.2 V15.5 H20.5 V19 H16.5 V15.5 H12.8 V11.5 H16.5 Z" fill="#5c8fd0" stroke="#1b3c6e" stroke-width="0.9"/>
<rect x="13.8" y="19.8" width="10" height="2.8" fill="#5c8fd0" stroke="#1b3c6e" stroke-width="0.9"/></svg>
<svg style="left:248px;top:105px" width="24" height="24" viewBox="0 0 24 24"><path d="M9.5 0.8 H0.8 V23.2 H23.2 V17.5 H21" fill="none" stroke="#cc0000" stroke-width="1.6" stroke-linejoin="miter"/><path d="M3 2 C6 4 9 5 12 5.2 H18 L19 6.5 V18 L12 19.5 C9 19 6 17.5 3.5 15 Z" fill="#fff" stroke="#222" stroke-width="0.8" stroke-linejoin="round"/>
<path d="M3.2 6.5 C6 8.5 9 9.5 12 9.8 H19 M3.3 10.8 C6 13 9 14 12 14.6 H19 M7.5 4.2 V17.5 M12 5.2 V19.5 M15.5 5.2 V9.8 M14 9.8 V14.6 M16 14.6 V18.8" fill="none" stroke="#222" stroke-width="0.8"/><path d="M16.5 6.8 H20.5 V11.5 H24.2 V15.5 H20.5 V19 H16.5 V15.5 H12.8 V11.5 H16.5 Z" fill="#5c8fd0" stroke="#1b3c6e" stroke-width="0.9"/>
<rect x="13.8" y="19.8" width="10" height="2.8" fill="#5c8fd0" stroke="#1b3c6e" stroke-width="0.9"/></svg>
<svg style="left:281px;top:105px" width="24" height="24" viewBox="0 0 24 24"><path d="M9.5 0.8 H0.8 V23.2 H23.2 V17.5 H21" fill="none" stroke="#cc0000" stroke-width="1.6" stroke-linejoin="miter"/><path d="M10 3.5 L17 2 L23 3.5 L22 6 L15 7.5 L10 6 Z M6 9 L13 7.5 L20 9.5 L19.5 12 L12.5 13.5 L6 11.5 Z M1.5 14.5 L9.5 13 L16 15 L15.5 19.5 L8.5 21 L1.5 18.5 Z" fill="#f4f4f2" stroke="#555753" stroke-width="0.8" stroke-linejoin="round"/>
<path d="M10 3.5 L15.5 5 L23 3.5 M6 9 L12.5 11 L20 9.5 M1.5 14.5 L8.5 16.5 L16 15 M8.5 16.5 V21 M12.5 11 V13.5" fill="none" stroke="#555753" stroke-width="0.8"/><path d="M16.5 6.8 H20.5 V11.5 H24.2 V15.5 H20.5 V19 H16.5 V15.5 H12.8 V11.5 H16.5 Z" fill="#5c8fd0" stroke="#1b3c6e" stroke-width="0.9"/>
<rect x="13.8" y="19.8" width="10" height="2.8" fill="#5c8fd0" stroke="#1b3c6e" stroke-width="0.9"/></svg>
<svg style="left:314px;top:105px" width="24" height="24" viewBox="0 0 24 24"><path d="M9.5 0.8 H0.8 V23.2 H23.2 V19.5 H22" fill="none" stroke="#cc0000" stroke-width="1.6" stroke-linejoin="miter"/><path d="M3 2.5 C5 4 8 5 11 5 L23 4.5 V17 L15 21.5 L10 18.5 C7 17.5 5 16 3.5 14.5 Z" fill="#f4f4f2" stroke="#333" stroke-width="0.8" stroke-linejoin="round"/>
<path d="M3.2 6.5 C5.5 8 8 9 10.5 9.5 M3.3 10.5 C5.5 12.5 8 13.5 10.3 14 M7 4.3 V16.8 M10.8 5 L10 18.5 M11 9.5 L23 8.8 M10.5 13.8 L23 12.8 M15 21.5 V9.3 M18 5 V9 M19 9 V13 M17 13.3 V20" fill="none" stroke="#333" stroke-width="0.8"/>
<path d="M8.5 20 L15.5 4" stroke="#e81010" stroke-width="1.6"/></svg>
<svg style="left:347px;top:105px" width="24" height="24" viewBox="0 0 24 24"><path d="M9.5 0.8 H0.8 V23.2 H23.2 V13 H21" fill="none" stroke="#cc0000" stroke-width="1.6" stroke-linejoin="miter"/><rect x="11.5" y="1" width="9.5" height="13" fill="#118a11"/><rect x="12.9" y="2.6" width="1.5" height="1.5" fill="#fff"/><rect x="15.4" y="2.6" width="1.5" height="1.5" fill="#fff"/><rect x="17.9" y="2.6" width="1.5" height="1.5" fill="#fff"/><rect x="12.9" y="5.4" width="1.5" height="1.5" fill="#fff"/><rect x="15.4" y="5.4" width="1.5" height="1.5" fill="#fff"/><rect x="17.9" y="5.4" width="1.5" height="1.5" fill="#fff"/><rect x="12.9" y="8.2" width="1.5" height="1.5" fill="#fff"/><rect x="15.4" y="8.2" width="1.5" height="1.5" fill="#fff"/><rect x="17.9" y="8.2" width="1.5" height="1.5" fill="#fff"/><rect x="12.9" y="11.0" width="1.5" height="1.5" fill="#fff"/><rect x="15.4" y="11.0" width="1.5" height="1.5" fill="#fff"/><rect x="17.9" y="11.0" width="1.5" height="1.5" fill="#fff"/><rect x="7.5" y="5" width="9.5" height="13.5" fill="#2222aa"/><rect x="8.9" y="6.6" width="1.5" height="1.5" fill="#fff"/><rect x="11.4" y="6.6" width="1.5" height="1.5" fill="#fff"/><rect x="13.9" y="6.6" width="1.5" height="1.5" fill="#fff"/><rect x="8.9" y="9.4" width="1.5" height="1.5" fill="#fff"/><rect x="11.4" y="9.4" width="1.5" height="1.5" fill="#fff"/><rect x="13.9" y="9.4" width="1.5" height="1.5" fill="#fff"/><rect x="8.9" y="12.2" width="1.5" height="1.5" fill="#fff"/><rect x="11.4" y="12.2" width="1.5" height="1.5" fill="#fff"/><rect x="13.9" y="12.2" width="1.5" height="1.5" fill="#fff"/><rect x="8.9" y="15.0" width="1.5" height="1.5" fill="#fff"/><rect x="11.4" y="15.0" width="1.5" height="1.5" fill="#fff"/><rect x="13.9" y="15.0" width="1.5" height="1.5" fill="#fff"/><rect x="3.5" y="10" width="10" height="13.2" fill="#000"/><rect x="4.9" y="11.6" width="1.5" height="1.5" fill="#fff"/><rect x="7.6" y="11.6" width="1.5" height="1.5" fill="#fff"/><rect x="10.2" y="11.6" width="1.5" height="1.5" fill="#fff"/><rect x="4.9" y="14.4" width="1.5" height="1.5" fill="#fff"/><rect x="7.6" y="14.4" width="1.5" height="1.5" fill="#fff"/><rect x="10.2" y="14.4" width="1.5" height="1.5" fill="#fff"/><rect x="4.9" y="17.2" width="1.5" height="1.5" fill="#fff"/><rect x="7.6" y="17.2" width="1.5" height="1.5" fill="#fff"/><rect x="10.2" y="17.2" width="1.5" height="1.5" fill="#fff"/><rect x="4.9" y="20.0" width="1.5" height="1.5" fill="#fff"/><rect x="7.6" y="20.0" width="1.5" height="1.5" fill="#fff"/><rect x="10.2" y="20.0" width="1.5" height="1.5" fill="#fff"/></svg>
<svg style="left:380px;top:105px" width="24" height="24" viewBox="0 0 24 24"><path d="M9.5 0.8 H0.8 V23.2 H23.2 V17.5 H21" fill="none" stroke="#cc0000" stroke-width="1.6" stroke-linejoin="miter"/><path d="M3.0 9.5 L8.2 11.164 L12.7 8.689 L7.5 7.025 Z" fill="#fcfcfc" stroke="#111" stroke-width="1.0" stroke-linejoin="round"/><path d="M3.0 9.5 L8.2 11.164 V15.664 L3.0 14.0 Z" fill="url(#gBrick)" stroke="#111" stroke-width="1.0" stroke-linejoin="round"/><path d="M8.2 11.164 L12.7 8.689 V13.189 L8.2 15.664 Z" fill="#c9cac6" stroke="#111" stroke-width="1.0" stroke-linejoin="round"/><path d="M8.2 11.2 L13.399999999999999 12.863999999999999 L17.9 10.389 L12.7 8.725 Z" fill="#fcfcfc" stroke="#111" stroke-width="1.0" stroke-linejoin="round"/><path d="M8.2 11.2 L13.399999999999999 12.863999999999999 V17.363999999999997 L8.2 15.7 Z" fill="url(#gBrick)" stroke="#111" stroke-width="1.0" stroke-linejoin="round"/><path d="M13.399999999999999 12.863999999999999 L17.9 10.389 V14.889 L13.399999999999999 17.363999999999997 Z" fill="#c9cac6" stroke="#111" stroke-width="1.0" stroke-linejoin="round"/><path d="M13.4 12.9 L18.6 14.564 L23.1 12.089 L17.9 10.425 Z" fill="#fcfcfc" stroke="#111" stroke-width="1.0" stroke-linejoin="round"/><path d="M13.4 12.9 L18.6 14.564 V19.064 L13.4 17.4 Z" fill="url(#gBrick)" stroke="#111" stroke-width="1.0" stroke-linejoin="round"/><path d="M18.6 14.564 L23.1 12.089 V16.589 L18.6 19.064 Z" fill="#c9cac6" stroke="#111" stroke-width="1.0" stroke-linejoin="round"/><path d="M3.0 5.0 L8.2 6.664 L12.7 4.189 L7.5 2.525 Z" fill="#fcfcfc" stroke="#111" stroke-width="1.0" stroke-linejoin="round"/><path d="M3.0 5.0 L8.2 6.664 V11.164 L3.0 9.5 Z" fill="url(#gBrick)" stroke="#111" stroke-width="1.0" stroke-linejoin="round"/><path d="M8.2 6.664 L12.7 4.189 V8.689 L8.2 11.164 Z" fill="#c9cac6" stroke="#111" stroke-width="1.0" stroke-linejoin="round"/><path d="M8.2 6.7 L13.399999999999999 8.364 L17.9 5.889000000000001 L12.7 4.225 Z" fill="#fcfcfc" stroke="#111" stroke-width="1.0" stroke-linejoin="round"/><path d="M8.2 6.7 L13.399999999999999 8.364 V12.864 L8.2 11.2 Z" fill="url(#gBrick)" stroke="#111" stroke-width="1.0" stroke-linejoin="round"/><path d="M13.399999999999999 8.364 L17.9 5.889000000000001 V10.389000000000001 L13.399999999999999 12.864 Z" fill="#c9cac6" stroke="#111" stroke-width="1.0" stroke-linejoin="round"/><path d="M13.4 8.4 L18.6 10.064 L23.1 7.589 L17.9 5.925000000000001 Z" fill="#fcfcfc" stroke="#111" stroke-width="1.0" stroke-linejoin="round"/><path d="M13.4 8.4 L18.6 10.064 V14.564 L13.4 12.9 Z" fill="url(#gBrick)" stroke="#111" stroke-width="1.0" stroke-linejoin="round"/><path d="M18.6 10.064 L23.1 7.589 V12.089 L18.6 14.564 Z" fill="#c9cac6" stroke="#111" stroke-width="1.0" stroke-linejoin="round"/><path d="M4 12.5 L7 13.5 M10 14.2 L12.5 15 M15 16 L17.5 16.8" stroke="#e06060" stroke-width="0.6"/></svg>
<svg style="left:413px;top:105px" width="24" height="24" viewBox="0 0 24 24"><path d="M9.5 0.8 H0.8 V23.2 H23.2 V17.5 H21" fill="none" stroke="#cc0000" stroke-width="1.6" stroke-linejoin="miter"/><path d="M2 11.5 L8.5 13.58 L14.5 10.28 L8 8.2 Z" fill="#fcfcfc" stroke="#111" stroke-width="1.0" stroke-linejoin="round"/><path d="M2 11.5 L8.5 13.58 V17.58 L2 15.5 Z" fill="url(#gBrick)" stroke="#111" stroke-width="1.0" stroke-linejoin="round"/><path d="M8.5 13.58 L14.5 10.28 V14.28 L8.5 17.58 Z" fill="#c9cac6" stroke="#111" stroke-width="1.0" stroke-linejoin="round"/><path d="M8.5 13.6 L15.0 15.68 L21.0 12.379999999999999 L14.5 10.299999999999999 Z" fill="#fcfcfc" stroke="#111" stroke-width="1.0" stroke-linejoin="round"/><path d="M8.5 13.6 L15.0 15.68 V19.68 L8.5 17.6 Z" fill="url(#gBrick)" stroke="#111" stroke-width="1.0" stroke-linejoin="round"/><path d="M15.0 15.68 L21.0 12.379999999999999 V16.38 L15.0 19.68 Z" fill="#c9cac6" stroke="#111" stroke-width="1.0" stroke-linejoin="round"/><path d="M8 8.2 L14.5 10.28 L20.5 6.979999999999999 L14 4.899999999999999 Z" fill="#fcfcfc" stroke="#111" stroke-width="1.0" stroke-linejoin="round"/><path d="M8 8.2 L14.5 10.28 V10.379999999999999 L8 8.299999999999999 Z" fill="url(#gBrick)" stroke="#111" stroke-width="1.0" stroke-linejoin="round"/><path d="M14.5 10.28 L20.5 6.979999999999999 V7.079999999999998 L14.5 10.379999999999999 Z" fill="#c9cac6" stroke="#111" stroke-width="1.0" stroke-linejoin="round"/><path d="M14.5 10.3 L21.0 12.38 L27.0 9.08 L20.5 7.0 Z" fill="#fcfcfc" stroke="#111" stroke-width="1.0" stroke-linejoin="round"/><path d="M14.5 10.3 L21.0 12.38 V16.380000000000003 L14.5 14.3 Z" fill="url(#gBrick)" stroke="#111" stroke-width="1.0" stroke-linejoin="round"/><path d="M21.0 12.38 L27.0 9.08 V13.08 L21.0 16.380000000000003 Z" fill="#c9cac6" stroke="#111" stroke-width="1.0" stroke-linejoin="round"/><path d="M3.5 15 L6.5 16 M10 17 L13 18" stroke="#e06060" stroke-width="0.6"/></svg>
<svg style="left:446px;top:105px" width="24" height="24" viewBox="0 0 24 24"><path d="M9.5 0.8 H0.8 V23.2 H23.2 V23.2 H23.2" fill="none" stroke="#cc0000" stroke-width="1.6" stroke-linejoin="miter"/><path d="M2 9 L10.5 11.72 L15.5 8.97 L7 6.25 Z" fill="#fcfcfc" stroke="#111" stroke-width="0.9" stroke-linejoin="round"/><path d="M2 9 L10.5 11.72 V16.22 L2 13.5 Z" fill="url(#gBrick)" stroke="#111" stroke-width="0.9" stroke-linejoin="round"/><path d="M10.5 11.72 L15.5 8.97 V13.47 L10.5 16.22 Z" fill="#c9cac6" stroke="#111" stroke-width="0.9" stroke-linejoin="round"/><path d="M6 4.5 L15 7.38 L20 4.63 L11 1.75 Z" fill="#fcfcfc" stroke="#111" stroke-width="0.9" stroke-linejoin="round"/><path d="M6 4.5 L15 7.38 V11.879999999999999 L6 9.0 Z" fill="url(#gBrick)" stroke="#111" stroke-width="0.9" stroke-linejoin="round"/><path d="M15 7.38 L20 4.63 V9.129999999999999 L15 11.879999999999999 Z" fill="#c9cac6" stroke="#111" stroke-width="0.9" stroke-linejoin="round"/><path d="M12.5 14 V11 C12.5 6.5 20.5 6.5 20.5 11 V14" fill="none" stroke="#0b8a8f" stroke-width="3.4"/><path d="M12.5 14 V11 C12.5 6.5 20.5 6.5 20.5 11 V14" fill="none" stroke="#fff" stroke-width="1.6" opacity="0.9"/>
<rect x="10" y="13" width="13" height="10.5" rx="0.8" fill="#19bcc0" stroke="#0b8a8f" stroke-width="0.9"/>
<path d="M10.8 15.5 H22.2 M10.8 18 H22.2 M10.8 20.5 H22.2" stroke="#0fa3a8" stroke-width="0.8"/></svg>
<svg style="left:280px;top:70px" width="16" height="16" viewBox="0 0 24 24"><path d="M9.5 0.8 H0.8 V23.2 H23.2 V17.5 H20" fill="none" stroke="#cc0000" stroke-width="1.6" stroke-linejoin="miter"/><path d="M2 10 L10.5 12.72 L15.5 9.97 L7 7.25 Z" fill="#fcfcfc" stroke="#111" stroke-width="0.9" stroke-linejoin="round"/><path d="M2 10 L10.5 12.72 V17.22 L2 14.5 Z" fill="url(#gBrick)" stroke="#111" stroke-width="0.9" stroke-linejoin="round"/><path d="M10.5 12.72 L15.5 9.97 V14.47 L10.5 17.22 Z" fill="#c9cac6" stroke="#111" stroke-width="0.9" stroke-linejoin="round"/><path d="M10.5 12.8 L19.0 15.520000000000001 L24.0 12.770000000000001 L15.5 10.05 Z" fill="#fcfcfc" stroke="#111" stroke-width="0.9" stroke-linejoin="round"/><path d="M10.5 12.8 L19.0 15.520000000000001 V20.020000000000003 L10.5 17.3 Z" fill="url(#gBrick)" stroke="#111" stroke-width="0.9" stroke-linejoin="round"/><path d="M19.0 15.520000000000001 L24.0 12.770000000000001 V17.270000000000003 L19.0 20.020000000000003 Z" fill="#c9cac6" stroke="#111" stroke-width="0.9" stroke-linejoin="round"/><path d="M6 5.5 L15 8.379999999999999 L20 5.629999999999999 L11 2.75 Z" fill="#fcfcfc" stroke="#111" stroke-width="0.9" stroke-linejoin="round"/><path d="M6 5.5 L15 8.379999999999999 V12.879999999999999 L6 10.0 Z" fill="url(#gBrick)" stroke="#111" stroke-width="0.9" stroke-linejoin="round"/><path d="M15 8.379999999999999 L20 5.629999999999999 V10.129999999999999 L15 12.879999999999999 Z" fill="#c9cac6" stroke="#111" stroke-width="0.9" stroke-linejoin="round"/><path d="M13.5 16.6 L17.5 17.9" stroke="#e05050" stroke-width="0.7"/><ellipse cx="9" cy="18.5" rx="7" ry="1.6" fill="#000" opacity="0.12"/></svg>
<div class="a" style="left:0;top:164px;width:399px;height:1px;background:#c2c2c2"></div>
<div class="a" style="left:61px;top:139px;width:54px;height:25px;background:linear-gradient(#e2e2e2,#d8d8d8);border:1px solid #c0c0c0;border-bottom:none;border-radius:3px 3px 0 0"></div>
<div class="a" style="left:0px;top:137px;width:61px;height:28px;background:linear-gradient(#f8f8f8,#efefef);border:1px solid #c0c0c0;border-bottom:none;border-radius:3px 3px 0 0"></div>
<div class="t" style="left:11.7px;top:144px;letter-spacing:0.195px;">Model</div>
<div class="t" style="left:71.4px;top:145px;letter-spacing:-0.559px;">Tasks</div>
<div class="t" style="left:152.8px;top:168px;letter-spacing:-0.03px;">Model</div>
<svg style="left:337.5px;top:169.5px" width="12" height="12" viewBox="0 0 12 12"><rect x="0.75" y="0.75" width="10.5" height="10.5" rx="1" fill="none" stroke="#6e6e6e" stroke-width="1.3"/><path d="M1 4 H11" stroke="#6e6e6e" stroke-width="1.3"/></svg>
<svg style="left:360.5px;top:169.5px" width="12" height="12" viewBox="0 0 12 12"><rect x="3.75" y="0.75" width="7.5" height="7.5" rx="0.8" fill="none" stroke="#6e6e6e" stroke-width="1.3"/><rect x="0.75" y="3.75" width="7.5" height="7.5" rx="0.8" fill="#efefef" stroke="#6e6e6e" stroke-width="1.3"/></svg>
<svg style="left:383.5px;top:169.5px" width="12" height="12" viewBox="0 0 12 12"><path d="M0.8 0.8 L11.2 11.2 M11.2 0.8 L0.8 11.2" stroke="#555" stroke-width="1.8"/></svg>
<div class="a" style="left:0;top:185px;width:399px;height:392px;background:#fff;border:1px solid #b8b8b8;border-left-color:#c8c8c8"></div>
<div class="a" style="left:384px;top:186px;width:14px;height:390px;background:#e4e4e4;border-left:1px solid #c4c4c4"></div><div class="a" style="left:384px;top:186px;width:14px;height:15px;background:linear-gradient(90deg,#fdfdfd,#f0f0f0);border:1px solid #c4c4c4;border-top:none"></div><div class="a" style="left:384px;top:561px;width:14px;height:15px;background:linear-gradient(90deg,#fdfdfd,#f0f0f0);border:1px solid #c4c4c4;border-bottom:none"></div><div class="a" style="left:384px;top:335px;width:14px;height:227px;background:linear-gradient(90deg,#fdfdfd,#f0f0f0);border:1px solid #bcbcbc"></div><svg style="left:387.5px;top:191px" width="7" height="5" viewBox="0 0 7 5"><path d="M0 4.5 L3.5 0.5 L7 4.5 Z" fill="#4d4d4d"/></svg>
<svg style="left:387.5px;top:566px" width="7" height="5" viewBox="0 0 7 5"><path d="M0 0.5 L3.5 4.5 L7 0.5 Z" fill="#4d4d4d"/></svg>

<svg style="left:66px;top:192.0px" width="12" height="8" viewBox="0 0 12 8"><path d="M0.6 3.6 C3 -0.4 9 -0.4 11.4 3.6 C9 7.6 3 7.6 0.6 3.6 Z" fill="#fff" stroke="#000" stroke-width="1.2"/><circle cx="6" cy="4.3" r="1.9" fill="#000"/></svg>
<svg style="left:86px;top:187.0px" width="16" height="16" viewBox="0 0 16 16"><path d="M7 1.5 L13 0.5 L15.5 2 L9.5 3.2 Z M4 6 L10.5 4.8 L13 6.5 L6.5 8 Z M0.8 11.5 L7.5 10 L10 12 L3.5 13.8 Z" fill="#fafafa" stroke="#777975" stroke-width="0.9" stroke-linejoin="round"/><path d="M9.5 3.2 V5 M13 6.5 V8.5 L6.5 10 V8 M4 6 V8 M10 12 V14 L3.5 15.5 V13.8 M0.8 11.5 V13.5 L3.5 15.5" fill="none" stroke="#8a8c88" stroke-width="0.7"/><path d="M2 14.8 L6 15.3" stroke="#b5c9a0" stroke-width="1"/></svg>
<div class="t" style="left:107.7px;top:188.0px;letter-spacing:-0.403px;color:#000;">Stairs001</div>
<svg style="left:47px;top:212.5px" width="8" height="5" viewBox="0 0 8 5"><path d="M0 0 H8 L4 4.5 Z" fill="#606060"/></svg>
<svg style="left:66px;top:211.0px" width="12" height="8" viewBox="0 0 12 8"><path d="M0.6 3.6 C3 -0.4 9 -0.4 11.4 3.6 C9 7.6 3 7.6 0.6 3.6 Z" fill="#fff" stroke="#000" stroke-width="1.2"/><circle cx="6" cy="4.3" r="1.9" fill="#000"/></svg>
<svg style="left:86px;top:206.0px" width="16" height="16" viewBox="0 0 16 16"><path d="M0.8 3 L8.5 1.5 L10 2.5 V5 L7 5.8 V14.5 L4.5 15.5 L3 14.8 V6 L0.8 5.2 Z" fill="#e8e9e5" stroke="#8a8c88" stroke-width="0.7" stroke-linejoin="round"/><path d="M0.8 3 L2.5 3.8 L10 2.5 M2.5 3.8 V5.8 M4.5 6.3 V15.5" stroke="#8a8c88" stroke-width="0.7" fill="none"/><path d="M9 8 L14.5 7 V13.5 L9 14.8 Z" fill="#d6d7d3" stroke="#8a8c88" stroke-width="0.7"/><path d="M11.5 7.6 V14.2" stroke="#8a8c88" stroke-width="0.7"/><circle cx="11" cy="4.6" r="4.4" fill="#2f6fc4"/><path d="M8.6 4.6 L10.4 6.4 L13.6 2.8" fill="none" stroke="#fff" stroke-width="1.5" stroke-linecap="round" stroke-linejoin="round"/></svg>
<div class="t" style="left:107.7px;top:207.0px;letter-spacing:-0.378px;color:#000;">Structure_1F</div>
<svg style="left:86px;top:230.0px" width="12" height="8" viewBox="0 0 12 8"><path d="M0.6 3.6 C3 -0.4 9 -0.4 11.4 3.6 C9 7.6 3 7.6 0.6 3.6 Z" fill="#fff" stroke="#000" stroke-width="1.2"/><circle cx="6" cy="4.3" r="1.9" fill="#000"/></svg>
<svg style="left:106px;top:225.0px" width="16" height="16" viewBox="0 0 16 16"><path d="M4.5 4.5 C6 1.5 9 1 10 3 L13 9 L9 14.5 H2 Z" fill="#d81b1b"/><path d="M8.5 8 L11 10.5 L13.5 8 L15.5 9 L13 12 L15.5 15 H12.5 L11 13.2 L9.5 15 H7.5 L9.8 12 Z" fill="#f2d40a" stroke="#b89a00" stroke-width="0.4"/><rect x="0.8" y="6.5" width="7.6" height="9" rx="1.6" fill="#c41fd0" stroke="#8a1494" stroke-width="0.5"/><circle cx="4.6" cy="9.3" r="1.2" fill="#fff"/><circle cx="4.6" cy="12.9" r="1.2" fill="#fff"/><circle cx="11" cy="4.6" r="4.4" fill="#2f6fc4"/><path d="M8.6 4.6 L10.4 6.4 L13.6 2.8" fill="none" stroke="#fff" stroke-width="1.5" stroke-linecap="round" stroke-linejoin="round"/></svg>
<div class="t" style="left:127.7px;top:226.0px;letter-spacing:-0.352px;color:#000;">ArchSketch__MasterLayout</div>
<svg style="left:47px;top:250.5px" width="8" height="5" viewBox="0 0 8 5"><path d="M0 0 H8 L4 4.5 Z" fill="#606060"/></svg>
<svg style="left:66px;top:249.0px" width="12" height="8" viewBox="0 0 12 8"><path d="M0.6 3.6 C3 -0.4 9 -0.4 11.4 3.6 C9 7.6 3 7.6 0.6 3.6 Z" fill="#fff" stroke="#000" stroke-width="1.2"/><circle cx="6" cy="4.3" r="1.9" fill="#000"/></svg>
<svg style="left:86px;top:244.0px" width="16" height="16" viewBox="0 0 16 16"><path d="M0.7 1 H5.5 L6.5 2.8 H15.3 V15 H0.7 Z" fill="#204a87" stroke="#1b3c6e" stroke-width="0.8" stroke-linejoin="round"/><path d="M0.7 5 H5.6 L6.8 3.8 H15.3 V15 H0.7 Z" fill="url(#gBlue)" stroke="#204a87" stroke-width="0.8" stroke-linejoin="round"/></svg>
<div class="t" style="left:107.7px;top:245.0px;letter-spacing:-0.642px;color:#000;">Grp__Wall</div>
<svg style="left:69px;top:267.5px" width="5" height="8" viewBox="0 0 5 8"><path d="M0 0 V8 L4.5 4 Z" fill="#606060"/></svg>
<svg style="left:86px;top:268.0px" width="12" height="8" viewBox="0 0 12 8"><path d="M0.6 3.6 C3 -0.4 9 -0.4 11.4 3.6 C9 7.6 3 7.6 0.6 3.6 Z" fill="#fff" stroke="#000" stroke-width="1.2"/><circle cx="6" cy="4.3" r="1.9" fill="#000"/></svg>
<svg style="left:106px;top:263.0px" width="16" height="16" viewBox="0 0 16 16"><path d="M1.5 3 L6 1.5 L14.5 4 V13 L10 15.5 L1.5 12.5 Z" fill="#f2f2f0" stroke="#777" stroke-width="0.7" stroke-linejoin="round"/><path d="M1.5 3 L10 5.8 L14.5 4 M10 5.8 V15.5 M1.5 6.2 L10 9 L14.5 7 M1.5 9.4 L10 12.2 L14.5 10 M5.5 4.3 V7.5 M4 7 V10.3 M7 8 V11.2 M5.5 10.8 V14 M12.3 4.9 V8 M12.3 11 V14.2" fill="none" stroke="#777" stroke-width="0.7"/><circle cx="11" cy="4.6" r="4.4" fill="#2f6fc4"/><path d="M8.6 4.6 L10.4 6.4 L13.6 2.8" fill="none" stroke="#fff" stroke-width="1.5" stroke-linecap="round" stroke-linejoin="round"/></svg>
<div class="t" style="left:127.7px;top:264.0px;letter-spacing:-0.735px;color:#000;">Wall__ArchSketch__1F</div>
<svg style="left:69px;top:286.5px" width="5" height="8" viewBox="0 0 5 8"><path d="M0 0 V8 L4.5 4 Z" fill="#606060"/></svg>
<svg style="left:86px;top:287.0px" width="12" height="8" viewBox="0 0 12 8"><path d="M0.6 3.6 C3 -0.4 9 -0.4 11.4 3.6 C9 7.6 3 7.6 0.6 3.6 Z" fill="#fff" stroke="#000" stroke-width="1.2"/><circle cx="6" cy="4.3" r="1.9" fill="#000"/></svg>
<svg style="left:106px;top:282.0px" width="16" height="16" viewBox="0 0 16 16"><path d="M1.5 3 L6 1.5 L14.5 4 V13 L10 15.5 L1.5 12.5 Z" fill="#f2f2f0" stroke="#777" stroke-width="0.7" stroke-linejoin="round"/><path d="M1.5 3 L10 5.8 L14.5 4 M10 5.8 V15.5 M1.5 6.2 L10 9 L14.5 7 M1.5 9.4 L10 12.2 L14.5 10 M5.5 4.3 V7.5 M4 7 V10.3 M7 8 V11.2 M5.5 10.8 V14 M12.3 4.9 V8 M12.3 11 V14.2" fill="none" stroke="#777" stroke-width="0.7"/><circle cx="11" cy="4.6" r="4.4" fill="#2f6fc4"/><path d="M8.6 4.6 L10.4 6.4 L13.6 2.8" fill="none" stroke="#fff" stroke-width="1.5" stroke-linecap="round" stroke-linejoin="round"/></svg>
<div class="t" style="left:127.7px;top:283.0px;letter-spacing:-0.77px;color:#000;">Lnk__Wall__ArchSketch__2F</div>
<svg style="left:47px;top:307.5px" width="8" height="5" viewBox="0 0 8 5"><path d="M0 0 H8 L4 4.5 Z" fill="#606060"/></svg>
<svg style="left:66px;top:306.0px" width="12" height="8" viewBox="0 0 12 8"><path d="M0.6 3.6 C3 -0.4 9 -0.4 11.4 3.6 C9 7.6 3 7.6 0.6 3.6 Z" fill="#fff" stroke="#000" stroke-width="1.2"/><circle cx="6" cy="4.3" r="1.9" fill="#000"/></svg>
<svg style="left:86px;top:301.0px" width="16" height="16" viewBox="0 0 16 16"><path d="M1 1 C3 2.5 5 3 7 3.2 H13 L14 4 V13.5 L8 15 C5.5 14.5 3 13.5 1.5 12 Z" fill="#fff" stroke="#666" stroke-width="0.7" stroke-linejoin="round"/><path d="M1.2 4.8 C3 6.3 5 7 7 7.2 H14 M1.3 8.5 C3 10 5 10.8 7.5 11 H14 M4.2 2.5 V13.3 M7.2 3.2 L7.8 15 M10.5 3.2 V14.3" fill="none" stroke="#666" stroke-width="0.7"/></svg>
<div class="t" style="left:107.7px;top:302.0px;letter-spacing:-0.148px;color:#000;">Curtain Wall</div>
<div class="a" style="left:1px;top:319px;width:288px;height:19px;background:#308cc6"></div>
<div class="a" style="left:125px;top:319px;width:164px;height:19px;border:1px solid #5aa7d8;opacity:.6"></div>
<svg style="left:86px;top:325.0px" width="12" height="8" viewBox="0 0 12 8"><path d="M0.6 3.6 C3 -0.4 9 -0.4 11.4 3.6 C9 7.6 3 7.6 0.6 3.6 Z" fill="#fff" stroke="#000" stroke-width="1.2"/><circle cx="6" cy="4.3" r="1.9" fill="#000"/></svg>
<svg style="left:106px;top:320.0px" width="16" height="16" viewBox="0 0 16 16"><path d="M4.5 4.5 C6 1.5 9 1 10 3 L13 9 L9 14.5 H2 Z" fill="#d81b1b"/><path d="M8.5 8 L11 10.5 L13.5 8 L15.5 9 L13 12 L15.5 15 H12.5 L11 13.2 L9.5 15 H7.5 L9.8 12 Z" fill="#f2d40a" stroke="#b89a00" stroke-width="0.4"/><rect x="0.8" y="6.5" width="7.6" height="9" rx="1.6" fill="#c41fd0" stroke="#8a1494" stroke-width="0.5"/><circle cx="4.6" cy="9.3" r="1.2" fill="#fff"/><circle cx="4.6" cy="12.9" r="1.2" fill="#fff"/><circle cx="11" cy="4.6" r="4.4" fill="#2f6fc4"/><path d="M8.6 4.6 L10.4 6.4 L13.6 2.8" fill="none" stroke="#fff" stroke-width="1.5" stroke-linecap="round" stroke-linejoin="round"/></svg>
<div class="t" style="left:127.7px;top:321.0px;letter-spacing:-0.352px;color:#fff;">ArchSketch__MasterLayout</div>
<svg style="left:47px;top:345.5px" width="8" height="5" viewBox="0 0 8 5"><path d="M0 0 H8 L4 4.5 Z" fill="#606060"/></svg>
<svg style="left:66px;top:344.0px" width="12" height="8" viewBox="0 0 12 8"><path d="M0.6 3.6 C3 -0.4 9 -0.4 11.4 3.6 C9 7.6 3 7.6 0.6 3.6 Z" fill="#fff" stroke="#000" stroke-width="1.2"/><circle cx="6" cy="4.3" r="1.9" fill="#000"/></svg>
<svg style="left:86px;top:339.0px" width="16" height="16" viewBox="0 0 16 16"><path d="M1 1 C3 2.5 5 3 7 3.2 H13 L14 4 V13.5 L8 15 C5.5 14.5 3 13.5 1.5 12 Z" fill="#fff" stroke="#666" stroke-width="0.7" stroke-linejoin="round"/><path d="M1.2 4.8 C3 6.3 5 7 7 7.2 H14 M1.3 8.5 C3 10 5 10.8 7.5 11 H14 M4.2 2.5 V13.3 M7.2 3.2 L7.8 15 M10.5 3.2 V14.3" fill="none" stroke="#666" stroke-width="0.7"/></svg>
<div class="t" style="left:107.7px;top:340.0px;letter-spacing:-0.346px;color:#000;">Curtain Wall_ Brise-Soleil001</div>
<svg style="left:86px;top:363.0px" width="12" height="8" viewBox="0 0 12 8"><path d="M0.6 3.6 C3 -0.4 9 -0.4 11.4 3.6 C9 7.6 3 7.6 0.6 3.6 Z" fill="#fff" stroke="#000" stroke-width="1.2"/><circle cx="6" cy="4.3" r="1.9" fill="#000"/></svg>
<svg style="left:106px;top:358.0px" width="16" height="16" viewBox="0 0 16 16"><path d="M4.5 4.5 C6 1.5 9 1 10 3 L13 9 L9 14.5 H2 Z" fill="#d81b1b"/><path d="M8.5 8 L11 10.5 L13.5 8 L15.5 9 L13 12 L15.5 15 H12.5 L11 13.2 L9.5 15 H7.5 L9.8 12 Z" fill="#f2d40a" stroke="#b89a00" stroke-width="0.4"/><rect x="0.8" y="6.5" width="7.6" height="9" rx="1.6" fill="#c41fd0" stroke="#8a1494" stroke-width="0.5"/><circle cx="4.6" cy="9.3" r="1.2" fill="#fff"/><circle cx="4.6" cy="12.9" r="1.2" fill="#fff"/><circle cx="11" cy="4.6" r="4.4" fill="#2f6fc4"/><path d="M8.6 4.6 L10.4 6.4 L13.6 2.8" fill="none" stroke="#fff" stroke-width="1.5" stroke-linecap="round" stroke-linejoin="round"/></svg>
<div class="t" style="left:127.7px;top:359.0px;letter-spacing:-0.352px;color:#000;">ArchSketch__MasterLayout</div>
<svg style="left:66px;top:382.0px" width="12" height="8" viewBox="0 0 12 8"><path d="M0.6 3.6 C3 -0.4 9 -0.4 11.4 3.6 C9 7.6 3 7.6 0.6 3.6 Z" fill="#fff" stroke="#000" stroke-width="1.2"/><circle cx="6" cy="4.3" r="1.9" fill="#000"/></svg>
<svg style="left:86px;top:377.0px" width="16" height="16" viewBox="0 0 16 16"><path d="M7 1.5 L13 0.5 L15.5 2 L9.5 3.2 Z M4 6 L10.5 4.8 L13 6.5 L6.5 8 Z M0.8 11.5 L7.5 10 L10 12 L3.5 13.8 Z" fill="#fafafa" stroke="#777975" stroke-width="0.9" stroke-linejoin="round"/><path d="M9.5 3.2 V5 M13 6.5 V8.5 L6.5 10 V8 M4 6 V8 M10 12 V14 L3.5 15.5 V13.8 M0.8 11.5 V13.5 L3.5 15.5" fill="none" stroke="#8a8c88" stroke-width="0.7"/><path d="M2 14.8 L6 15.3" stroke="#b5c9a0" stroke-width="1"/></svg>
<div class="t" style="left:107.7px;top:378.0px;letter-spacing:-0.365px;color:#000;">Stairs003</div>
<svg style="left:49px;top:400.5px" width="5" height="8" viewBox="0 0 5 8"><path d="M0 0 V8 L4.5 4 Z" fill="#606060"/></svg>
<svg style="left:66px;top:399.7px" width="12" height="10" viewBox="0 0 12 10"><path d="M0.6 4.6 C3 0.6 9 0.6 11.4 4.6 C9 8.6 3 8.6 0.6 4.6 Z" fill="none" stroke="#9c9c9c" stroke-width="1.1"/><circle cx="6" cy="4.8" r="2" fill="none" stroke="#9c9c9c" stroke-width="1"/><path d="M1.5 0.5 L10.5 9" stroke="#9c9c9c" stroke-width="1.1"/></svg>
<svg style="left:86px;top:396.0px" width="16" height="16" viewBox="0 0 16 16"><g opacity=".5"><path d="M0.8 3 L8.5 1.5 L10 2.5 V5 L7 5.8 V14.5 L4.5 15.5 L3 14.8 V6 L0.8 5.2 Z" fill="#e8e9e5" stroke="#8a8c88" stroke-width="0.7" stroke-linejoin="round"/><path d="M0.8 3 L2.5 3.8 L10 2.5 M2.5 3.8 V5.8 M4.5 6.3 V15.5" stroke="#8a8c88" stroke-width="0.7" fill="none"/><path d="M9 8 L14.5 7 V13.5 L9 14.8 Z" fill="#d6d7d3" stroke="#8a8c88" stroke-width="0.7"/><path d="M11.5 7.6 V14.2" stroke="#8a8c88" stroke-width="0.7"/></g><circle cx="11" cy="4.6" r="4.4" fill="#2f6fc4"/><path d="M8.6 4.6 L10.4 6.4 L13.6 2.8" fill="none" stroke="#fff" stroke-width="1.5" stroke-linecap="round" stroke-linejoin="round"/></svg>
<div class="t" style="left:107.7px;top:397.0px;letter-spacing:-0.378px;color:#b6b6b6;">Structure_2F</div>
<svg style="left:49px;top:419.5px" width="5" height="8" viewBox="0 0 5 8"><path d="M0 0 V8 L4.5 4 Z" fill="#606060"/></svg>
<svg style="left:66px;top:418.7px" width="12" height="10" viewBox="0 0 12 10"><path d="M0.6 4.6 C3 0.6 9 0.6 11.4 4.6 C9 8.6 3 8.6 0.6 4.6 Z" fill="none" stroke="#9c9c9c" stroke-width="1.1"/><circle cx="6" cy="4.8" r="2" fill="none" stroke="#9c9c9c" stroke-width="1"/><path d="M1.5 0.5 L10.5 9" stroke="#9c9c9c" stroke-width="1.1"/></svg>
<svg style="left:86px;top:415.0px" width="16" height="16" viewBox="0 0 16 16"><g opacity=".5"><path d="M0.8 3 L8.5 1.5 L10 2.5 V5 L7 5.8 V14.5 L4.5 15.5 L3 14.8 V6 L0.8 5.2 Z" fill="#e8e9e5" stroke="#8a8c88" stroke-width="0.7" stroke-linejoin="round"/><path d="M0.8 3 L2.5 3.8 L10 2.5 M2.5 3.8 V5.8 M4.5 6.3 V15.5" stroke="#8a8c88" stroke-width="0.7" fill="none"/><path d="M9 8 L14.5 7 V13.5 L9 14.8 Z" fill="#d6d7d3" stroke="#8a8c88" stroke-width="0.7"/><path d="M11.5 7.6 V14.2" stroke="#8a8c88" stroke-width="0.7"/></g><circle cx="11" cy="4.6" r="4.4" fill="#2f6fc4"/><path d="M8.6 4.6 L10.4 6.4 L13.6 2.8" fill="none" stroke="#fff" stroke-width="1.5" stroke-linecap="round" stroke-linejoin="round"/></svg>
<div class="t" style="left:107.7px;top:416.0px;letter-spacing:-0.506px;color:#b6b6b6;">Structure__3F</div>
<svg style="left:46px;top:437.7px" width="12" height="10" viewBox="0 0 12 10"><path d="M0.6 4.6 C3 0.6 9 0.6 11.4 4.6 C9 8.6 3 8.6 0.6 4.6 Z" fill="none" stroke="#9c9c9c" stroke-width="1.1"/><circle cx="6" cy="4.8" r="2" fill="none" stroke="#9c9c9c" stroke-width="1"/><path d="M1.5 0.5 L10.5 9" stroke="#9c9c9c" stroke-width="1.1"/></svg>
<svg style="left:66px;top:434.0px" width="16" height="16" viewBox="0 0 16 16"><circle cx="8" cy="8" r="7.3" fill="#e6e6e6" stroke="#b0b0b0" stroke-width="0.8"/><path d="M8 0.8 A7.2 7.2 0 0 1 8 15.2 Z" fill="#c2c2c2"/><path d="M9 3 L14.5 8 L9 13 Z" fill="#9c9c9c"/><path d="M2.3 11 L4.6 4.5 L6.9 11 M3.1 9 H6.1" fill="none" stroke="#bdbdbd" stroke-width="1"/></svg>
<div class="t" style="left:87.7px;top:435.0px;letter-spacing:-0.312px;color:#b6b6b6;">Section</div>
<svg style="left:29px;top:457.5px" width="5" height="8" viewBox="0 0 5 8"><path d="M0 0 V8 L4.5 4 Z" fill="#606060"/></svg>
<svg style="left:46px;top:458.0px" width="12" height="8" viewBox="0 0 12 8"><path d="M0.6 3.6 C3 -0.4 9 -0.4 11.4 3.6 C9 7.6 3 7.6 0.6 3.6 Z" fill="#fff" stroke="#000" stroke-width="1.2"/><circle cx="6" cy="4.3" r="1.9" fill="#000"/></svg>
<svg style="left:66px;top:453.0px" width="16" height="16" viewBox="0 0 16 16"><path d="M0.7 1 H5.5 L6.5 2.8 H15.3 V15 H0.7 Z" fill="#204a87" stroke="#1b3c6e" stroke-width="0.8" stroke-linejoin="round"/><path d="M0.7 5 H5.6 L6.8 3.8 H15.3 V15 H0.7 Z" fill="url(#gBlue)" stroke="#204a87" stroke-width="0.8" stroke-linejoin="round"/></svg>
<div class="t" style="left:87.7px;top:454.0px;letter-spacing:-0.484px;color:#000;">Grp__NotUsed</div>
<svg style="left:29px;top:476.5px" width="5" height="8" viewBox="0 0 5 8"><path d="M0 0 V8 L4.5 4 Z" fill="#606060"/></svg>
<svg style="left:46px;top:475.7px" width="12" height="10" viewBox="0 0 12 10"><path d="M0.6 4.6 C3 0.6 9 0.6 11.4 4.6 C9 8.6 3 8.6 0.6 4.6 Z" fill="none" stroke="#9c9c9c" stroke-width="1.1"/><circle cx="6" cy="4.8" r="2" fill="none" stroke="#9c9c9c" stroke-width="1"/><path d="M1.5 0.5 L10.5 9" stroke="#9c9c9c" stroke-width="1.1"/></svg>
<svg style="left:66px;top:472.0px" width="16" height="16" viewBox="0 0 16 16"><path d="M0.7 1 H5.5 L6.5 2.8 H15.3 V15 H0.7 Z" fill="#9a9a9a" stroke="#8c8c8c" stroke-width="0.8" stroke-linejoin="round"/><path d="M0.7 5 H5.6 L6.8 3.8 H15.3 V15 H0.7 Z" fill="#b4b4b4" stroke="#9a9a9a" stroke-width="0.8" stroke-linejoin="round"/></svg>
<div class="t" style="left:87.7px;top:473.0px;letter-spacing:-0.679px;color:#b6b6b6;">Grp__Shp2DV__BldgPt_L1--Grp_Wall</div>
<svg style="left:29px;top:495.5px" width="5" height="8" viewBox="0 0 5 8"><path d="M0 0 V8 L4.5 4 Z" fill="#606060"/></svg>
<svg style="left:46px;top:494.7px" width="12" height="10" viewBox="0 0 12 10"><path d="M0.6 4.6 C3 0.6 9 0.6 11.4 4.6 C9 8.6 3 8.6 0.6 4.6 Z" fill="none" stroke="#9c9c9c" stroke-width="1.1"/><circle cx="6" cy="4.8" r="2" fill="none" stroke="#9c9c9c" stroke-width="1"/><path d="M1.5 0.5 L10.5 9" stroke="#9c9c9c" stroke-width="1.1"/></svg>
<svg style="left:66px;top:491.0px" width="16" height="16" viewBox="0 0 16 16"><path d="M0.7 1 H5.5 L6.5 2.8 H15.3 V15 H0.7 Z" fill="#9a9a9a" stroke="#8c8c8c" stroke-width="0.8" stroke-linejoin="round"/><path d="M0.7 5 H5.6 L6.8 3.8 H15.3 V15 H0.7 Z" fill="#b4b4b4" stroke="#9a9a9a" stroke-width="0.8" stroke-linejoin="round"/></svg>
<div class="t" style="left:87.7px;top:492.0px;letter-spacing:-0.725px;color:#b6b6b6;">Grp__Types</div>
<svg style="left:29px;top:514.5px" width="5" height="8" viewBox="0 0 5 8"><path d="M0 0 V8 L4.5 4 Z" fill="#606060"/></svg>
<svg style="left:46px;top:513.7px" width="12" height="10" viewBox="0 0 12 10"><path d="M0.6 4.6 C3 0.6 9 0.6 11.4 4.6 C9 8.6 3 8.6 0.6 4.6 Z" fill="none" stroke="#9c9c9c" stroke-width="1.1"/><circle cx="6" cy="4.8" r="2" fill="none" stroke="#9c9c9c" stroke-width="1"/><path d="M1.5 0.5 L10.5 9" stroke="#9c9c9c" stroke-width="1.1"/></svg>
<svg style="left:66px;top:510.0px" width="16" height="16" viewBox="0 0 16 16"><rect x="0.7" y="2.2" width="14.6" height="11.2" fill="#f4f4f4" stroke="#c6c6c6" stroke-width="0.9"/></svg>
<div class="t" style="left:87.7px;top:511.0px;letter-spacing:-0.658px;color:#b6b6b6;">Page</div>
<svg style="left:29px;top:533.5px" width="5" height="8" viewBox="0 0 5 8"><path d="M0 0 V8 L4.5 4 Z" fill="#606060"/></svg>
<svg style="left:46px;top:532.7px" width="12" height="10" viewBox="0 0 12 10"><path d="M0.6 4.6 C3 0.6 9 0.6 11.4 4.6 C9 8.6 3 8.6 0.6 4.6 Z" fill="none" stroke="#9c9c9c" stroke-width="1.1"/><circle cx="6" cy="4.8" r="2" fill="none" stroke="#9c9c9c" stroke-width="1"/><path d="M1.5 0.5 L10.5 9" stroke="#9c9c9c" stroke-width="1.1"/></svg>
<svg style="left:66px;top:529.0px" width="16" height="16" viewBox="0 0 16 16"><g opacity=".5"><path d="M1 1 C3 2.5 5 3 7 3.2 H13 L14 4 V13.5 L8 15 C5.5 14.5 3 13.5 1.5 12 Z" fill="#fff" stroke="#666" stroke-width="0.7" stroke-linejoin="round"/><path d="M1.2 4.8 C3 6.3 5 7 7 7.2 H14 M1.3 8.5 C3 10 5 10.8 7.5 11 H14 M4.2 2.5 V13.3 M7.2 3.2 L7.8 15 M10.5 3.2 V14.3" fill="none" stroke="#666" stroke-width="0.7"/></g><circle cx="11" cy="4.6" r="4.4" fill="#2f6fc4"/><path d="M8.6 4.6 L10.4 6.4 L13.6 2.8" fill="none" stroke="#fff" stroke-width="1.5" stroke-linecap="round" stroke-linejoin="round"/></svg>
<div class="t" style="left:87.7px;top:530.0px;letter-spacing:-0.296px;color:#b6b6b6;">Curtain Wall_ Brise-Soleil</div>
<svg style="left:29px;top:552.5px" width="5" height="8" viewBox="0 0 5 8"><path d="M0 0 V8 L4.5 4 Z" fill="#606060"/></svg>
<svg style="left:46px;top:553.0px" width="12" height="8" viewBox="0 0 12 8"><path d="M0.6 3.6 C3 -0.4 9 -0.4 11.4 3.6 C9 7.6 3 7.6 0.6 3.6 Z" fill="#fff" stroke="#000" stroke-width="1.2"/><circle cx="6" cy="4.3" r="1.9" fill="#000"/></svg>
<svg style="left:66px;top:548.0px" width="16" height="16" viewBox="0 0 16 16"><circle cx="10" cy="4.2" r="3.6" fill="#f0d41c" stroke="#8f7c00" stroke-width="0.7"/><circle cx="4.2" cy="9" r="3.6" fill="#f0d41c" stroke="#8f7c00" stroke-width="0.7"/><circle cx="11" cy="11.5" r="3.6" fill="#f0d41c" stroke="#8f7c00" stroke-width="0.7"/><circle cx="9" cy="3.2" r="1.1" fill="#fff6a8"/><circle cx="3.2" cy="8" r="1.1" fill="#fff6a8"/><circle cx="10" cy="10.5" r="1.1" fill="#fff6a8"/></svg>
<div class="t" style="left:87.7px;top:549.0px;letter-spacing:0.031px;color:#000;">Materials</div>
<div class="a" style="left:193px;top:579px;width:13px;height:1px;background:repeating-linear-gradient(90deg,#b0b0b0 0 1px,transparent 1px 3px)"></div>
<div class="a" style="left:1px;top:582px;width:398px;height:257px;border:1px solid #c0c0c0;background:#f4f4f4"></div>
<div class="a" style="left:2px;top:583px;width:395px;height:254px;border:1px solid #b4b4b4;background:#fff;overflow:hidden"></div>
<div class="a" style="left:3px;top:584px;width:378px;height:22px;background:#a0a0a0;overflow:hidden"><div class="t" style="left:2.7px;top:4px;letter-spacing:-0.35px;font-weight:bold;color:#fff;">Added Arch Sketch Properties</div></div>
<div class="a" style="left:3px;top:606px;width:378px;height:22px;background:#f7f7f7;overflow:hidden"><div class="a" style="left:20px;top:21px;width:358px;height:1px;background:#c8c8c8"></div><div class="a" style="left:216px;top:0;width:1px;height:22px;background:#c8c8c8"></div><div class="t" style="left:22.7px;top:4px;letter-spacing:-0.105px;">Align</div><div class="t" style="left:220.6px;top:4px;letter-spacing:-0.226px;">Center</div></div>
<div class="a" style="left:3px;top:628px;width:378px;height:22px;background:#ffffff;overflow:hidden"><div class="a" style="left:20px;top:21px;width:358px;height:1px;background:#c8c8c8"></div><div class="a" style="left:216px;top:0;width:1px;height:22px;background:#c8c8c8"></div><div class="t" style="left:22.7px;top:4px;letter-spacing:-0.284px;">Arch Sketch Width</div><div class="t" style="left:220.6px;top:4px;letter-spacing:-0.24px;">200.0000 mm</div></div>
<div class="a" style="left:3px;top:650px;width:378px;height:22px;background:#f7f7f7;overflow:hidden"><div class="a" style="left:20px;top:21px;width:358px;height:1px;background:#c8c8c8"></div><div class="a" style="left:216px;top:0;width:1px;height:22px;background:#c8c8c8"></div><div class="t" style="left:22.7px;top:4px;letter-spacing:-0.258px;">Arch Sketch Width Global</div><div class="t" style="left:220.6px;top:4px;letter-spacing:-0.24px;">200.0000 mm</div></div>
<div class="a" style="left:3px;top:672px;width:378px;height:22px;background:#ffffff;overflow:hidden"><div class="a" style="left:20px;top:21px;width:358px;height:1px;background:#c8c8c8"></div><div class="a" style="left:216px;top:0;width:1px;height:22px;background:#c8c8c8"></div><div class="t" style="left:22.7px;top:4px;letter-spacing:-0.267px;">Detect Room</div><div class="a" style="left:220px;top:4px;width:13px;height:13px;border:1px solid #c2c2c2;background:#fff;border-radius:2px"></div><div class="t" style="left:238.9px;top:4px;letter-spacing:-0.125px;">No</div></div>
<div class="a" style="left:3px;top:694px;width:378px;height:22px;background:#f7f7f7;overflow:hidden"><div class="a" style="left:20px;top:21px;width:358px;height:1px;background:#c8c8c8"></div><div class="a" style="left:216px;top:0;width:1px;height:22px;background:#c8c8c8"></div><div class="t" style="left:22.7px;top:4px;letter-spacing:-0.101px;">Floor Height</div><div class="t" style="left:220.6px;top:4px;letter-spacing:-0.276px;">3000.0000 mm</div></div>
<div class="a" style="left:3px;top:716px;width:378px;height:22px;background:#ffffff;overflow:hidden"><div class="a" style="left:20px;top:21px;width:358px;height:1px;background:#c8c8c8"></div><div class="a" style="left:216px;top:0;width:1px;height:22px;background:#c8c8c8"></div><div class="t" style="left:22.7px;top:4px;letter-spacing:-0.328px;">Master Sketch Edge Groups And...</div><div class="t" style="left:220.6px;top:4px;letter-spacing:0.866px;">[]</div></div>
<div class="a" style="left:3px;top:738px;width:378px;height:22px;background:#f7f7f7;overflow:hidden"><div class="a" style="left:20px;top:21px;width:358px;height:1px;background:#c8c8c8"></div><div class="a" style="left:216px;top:0;width:1px;height:22px;background:#c8c8c8"></div><div class="t" style="left:22.7px;top:4px;letter-spacing:-0.251px;">Property Set</div><div class="t" style="left:220.6px;top:4px;letter-spacing:0.066px;">Default</div></div>
<div class="a" style="left:3px;top:760px;width:378px;height:22px;background:#ffffff;overflow:hidden"><div class="a" style="left:20px;top:21px;width:358px;height:1px;background:#c8c8c8"></div><div class="a" style="left:216px;top:0;width:1px;height:22px;background:#c8c8c8"></div><div class="t" style="left:22.7px;top:4px;letter-spacing:-0.078px;">Wall Height</div><div class="t" style="left:220.6px;top:4px;letter-spacing:-0.276px;">2850.0000 mm</div></div>
<div class="a" style="left:3px;top:782px;width:378px;height:22px;background:#a0a0a0;overflow:hidden"><div class="t" style="left:2.7px;top:4px;letter-spacing:0.054px;font-weight:bold;color:#fff;">Attachment</div></div>
<div class="a" style="left:3px;top:804px;width:378px;height:22px;background:#f7f7f7;overflow:hidden"><div class="a" style="left:20px;top:21px;width:358px;height:1px;background:#c8c8c8"></div><div class="a" style="left:216px;top:0;width:1px;height:22px;background:#c8c8c8"></div><div class="t" style="left:22.7px;top:4px;letter-spacing:-0.173px;">Attacher Engine</div><div class="t" style="left:220.6px;top:4px;letter-spacing:-0.359px;">Engine Plane</div></div>
<div class="a" style="left:3px;top:826px;width:378px;height:10px;background:#ffffff;overflow:hidden"><div class="a" style="left:20px;top:21px;width:358px;height:1px;background:#c8c8c8"></div><div class="a" style="left:216px;top:0;width:1px;height:22px;background:#c8c8c8"></div><div class="t" style="left:22.7px;top:4px;letter-spacing:-0.189px;">Attachment Support</div></div>
<div class="a" style="left:381px;top:584px;width:15px;height:252px;background:#e4e4e4;border-left:1px solid #c4c4c4"></div><div class="a" style="left:381px;top:584px;width:15px;height:15px;background:linear-gradient(90deg,#fdfdfd,#f0f0f0);border:1px solid #c4c4c4;border-top:none"></div><div class="a" style="left:381px;top:821px;width:15px;height:15px;background:linear-gradient(90deg,#fdfdfd,#f0f0f0);border:1px solid #c4c4c4;border-bottom:none"></div><div class="a" style="left:381px;top:599px;width:15px;height:41px;background:linear-gradient(90deg,#fdfdfd,#f0f0f0);border:1px solid #bcbcbc"></div><svg style="left:385.0px;top:589px" width="7" height="5" viewBox="0 0 7 5"><path d="M0 4.5 L3.5 0.5 L7 4.5 Z" fill="#4d4d4d"/></svg>
<svg style="left:385.0px;top:826px" width="7" height="5" viewBox="0 0 7 5"><path d="M0 0.5 L3.5 4.5 L7 0.5 Z" fill="#4d4d4d"/></svg>

<div class="a" style="left:1px;top:839px;width:52px;height:25px;background:#e7e7e7;border:1px solid #c0c0c0;border-top:none;border-radius:0 0 3px 3px"></div>
<div class="a" style="left:52px;top:838px;width:51px;height:28px;background:linear-gradient(#ffffff,#f6f6f6);border:1px solid #c0c0c0;border-top:none;border-radius:0 0 3px 3px"></div>
<div class="t" style="left:12.3px;top:844px;letter-spacing:-0.251px;">View</div>
<div class="t" style="left:63.8px;top:845px;letter-spacing:-0.223px;">Data</div>
<div class="a" style="left:401px;top:496px;width:1px;height:13px;background:repeating-linear-gradient(#b0b0b0 0 1px,transparent 1px 3px)"></div>
<svg style="left:405px;top:137px" width="1515" height="698" viewBox="405 137 1515 698" shape-rendering="crispEdges">
<defs><linearGradient id="bg3d" x1="0" y1="0" x2="0" y2="1"><stop offset="0" stop-color="#c6bbba"/><stop offset="1" stop-color="#ddd5d4"/></linearGradient></defs>
<rect x="405" y="137" width="1515" height="698" fill="url(#bg3d)"/>
<polygon points="602.8,327.0 1100.5,214.5 1469.0,458.0 909.0,800.0" fill="#8797a6" />
<polygon points="602.8,327.0 1100.5,214.5 1103.4,174.4 586.2,274.0" fill="#7b939c" /><polygon points="601.1,321.7 1100.8,210.5 1101.1,205.9 599.2,315.6" fill="#7f8676" /><line x1="601.1" y1="321.7" x2="1100.8" y2="210.5" stroke="#2d4f58" stroke-width="1.3" /><line x1="599.2" y1="315.6" x2="1101.1" y2="205.9" stroke="#2d4f58" stroke-width="1.3" /><line x1="600.2" y1="318.7" x2="1101.0" y2="208.2" stroke="#2d4f58" stroke-width="0.8" opacity="0.7"/><polygon points="597.6,310.3 1101.4,201.9 1101.7,197.3 595.7,304.2" fill="#7f8676" /><line x1="597.6" y1="310.3" x2="1101.4" y2="201.9" stroke="#2d4f58" stroke-width="1.3" /><line x1="595.7" y1="304.2" x2="1101.7" y2="197.3" stroke="#2d4f58" stroke-width="1.3" /><line x1="596.6" y1="307.3" x2="1101.6" y2="199.6" stroke="#2d4f58" stroke-width="0.8" opacity="0.7"/><polygon points="593.3,296.5 1102.2,191.5 1102.5,187.0 591.5,290.7" fill="#7f8676" /><line x1="593.3" y1="296.5" x2="1102.2" y2="191.5" stroke="#2d4f58" stroke-width="1.3" /><line x1="591.5" y1="290.7" x2="1102.5" y2="187.0" stroke="#2d4f58" stroke-width="1.3" /><line x1="592.4" y1="293.6" x2="1102.3" y2="189.2" stroke="#2d4f58" stroke-width="0.8" opacity="0.7"/><polygon points="589.8,285.4 1102.8,183.0 1103.1,178.6 588.0,279.6" fill="#7f8676" /><line x1="589.8" y1="285.4" x2="1102.8" y2="183.0" stroke="#2d4f58" stroke-width="1.3" /><line x1="588.0" y1="279.6" x2="1103.1" y2="178.6" stroke="#2d4f58" stroke-width="1.3" /><line x1="588.9" y1="282.5" x2="1102.9" y2="180.8" stroke="#2d4f58" stroke-width="0.8" opacity="0.7"/><line x1="594.7" y1="301.1" x2="1101.9" y2="194.9" stroke="#0a0a0a" stroke-width="2" /><line x1="601.6" y1="327.0" x2="585.0" y2="274.0" stroke="#2e525c" stroke-width="4.2" opacity="0.8"/><line x1="602.8" y1="327.0" x2="586.2" y2="274.0" stroke="#0a0a0a" stroke-width="1.6" /><line x1="696.2" y1="305.6" x2="684.3" y2="254.9" stroke="#2e525c" stroke-width="4.2" opacity="0.8"/><line x1="697.4" y1="305.6" x2="685.5" y2="254.9" stroke="#0a0a0a" stroke-width="1.6" /><line x1="781.0" y1="286.5" x2="772.7" y2="237.9" stroke="#2e525c" stroke-width="4.2" opacity="0.8"/><line x1="782.2" y1="286.5" x2="773.9" y2="237.9" stroke="#0a0a0a" stroke-width="1.6" /><line x1="857.3" y1="269.2" x2="852.2" y2="222.6" stroke="#2e525c" stroke-width="4.2" opacity="0.8"/><line x1="858.5" y1="269.2" x2="853.4" y2="222.6" stroke="#0a0a0a" stroke-width="1.6" /><line x1="926.4" y1="253.6" x2="923.8" y2="208.8" stroke="#2e525c" stroke-width="4.2" opacity="0.8"/><line x1="927.6" y1="253.6" x2="925.0" y2="208.8" stroke="#0a0a0a" stroke-width="1.6" /><line x1="989.2" y1="239.4" x2="988.8" y2="196.3" stroke="#2e525c" stroke-width="4.2" opacity="0.8"/><line x1="990.4" y1="239.4" x2="990.0" y2="196.3" stroke="#0a0a0a" stroke-width="1.6" /><line x1="1046.6" y1="226.4" x2="1048.0" y2="184.8" stroke="#2e525c" stroke-width="4.2" opacity="0.8"/><line x1="1047.8" y1="226.4" x2="1049.2" y2="184.8" stroke="#0a0a0a" stroke-width="1.6" /><line x1="1099.3" y1="214.5" x2="1102.2" y2="174.4" stroke="#2e525c" stroke-width="4.2" opacity="0.8"/><line x1="1100.5" y1="214.5" x2="1103.4" y2="174.4" stroke="#0a0a0a" stroke-width="1.6" />
<polygon points="1100.5,214.5 1469.0,458.0 1492.2,411.0 1103.4,174.4" fill="#8fb7bf" /><polygon points="1100.8,210.5 1471.3,453.3 1474.0,447.9 1101.1,205.9" fill="#90a797" /><line x1="1100.8" y1="210.5" x2="1471.3" y2="453.3" stroke="#3a6670" stroke-width="1.0" /><line x1="1101.1" y1="205.9" x2="1474.0" y2="447.9" stroke="#3a6670" stroke-width="1.0" /><line x1="1101.0" y1="208.2" x2="1472.7" y2="450.6" stroke="#3a6670" stroke-width="0.8" opacity="0.7"/><polygon points="1101.4,201.9 1476.3,443.2 1479.0,437.8 1101.7,197.3" fill="#90a797" /><line x1="1101.4" y1="201.9" x2="1476.3" y2="443.2" stroke="#3a6670" stroke-width="1.0" /><line x1="1101.7" y1="197.3" x2="1479.0" y2="437.8" stroke="#3a6670" stroke-width="1.0" /><line x1="1101.6" y1="199.6" x2="1477.7" y2="440.5" stroke="#3a6670" stroke-width="0.8" opacity="0.7"/><polygon points="1102.2,191.5 1482.4,431.0 1484.9,425.8 1102.5,187.0" fill="#90a797" /><line x1="1102.2" y1="191.5" x2="1482.4" y2="431.0" stroke="#3a6670" stroke-width="1.0" /><line x1="1102.5" y1="187.0" x2="1484.9" y2="425.8" stroke="#3a6670" stroke-width="1.0" /><line x1="1102.3" y1="189.2" x2="1483.6" y2="428.4" stroke="#3a6670" stroke-width="0.8" opacity="0.7"/><polygon points="1102.8,183.0 1487.3,421.1 1489.8,416.0 1103.1,178.6" fill="#90a797" /><line x1="1102.8" y1="183.0" x2="1487.3" y2="421.1" stroke="#3a6670" stroke-width="1.0" /><line x1="1103.1" y1="178.6" x2="1489.8" y2="416.0" stroke="#3a6670" stroke-width="1.0" /><line x1="1102.9" y1="180.8" x2="1488.5" y2="418.5" stroke="#3a6670" stroke-width="0.8" opacity="0.7"/><line x1="1101.9" y1="194.9" x2="1480.4" y2="435.0" stroke="#0a0a0a" stroke-width="2" /><line x1="1099.3" y1="214.5" x2="1102.2" y2="174.4" stroke="#2e525c" stroke-width="4.2" opacity="0.8"/><line x1="1100.5" y1="214.5" x2="1103.4" y2="174.4" stroke="#0a0a0a" stroke-width="1.6" /><line x1="1139.3" y1="240.9" x2="1143.6" y2="199.6" stroke="#2e525c" stroke-width="4.2" opacity="0.8"/><line x1="1140.5" y1="240.9" x2="1144.8" y2="199.6" stroke="#0a0a0a" stroke-width="1.6" /><line x1="1182.6" y1="269.5" x2="1188.7" y2="227.1" stroke="#2e525c" stroke-width="4.2" opacity="0.8"/><line x1="1183.8" y1="269.5" x2="1189.9" y2="227.1" stroke="#0a0a0a" stroke-width="1.6" /><line x1="1229.7" y1="300.7" x2="1238.0" y2="257.1" stroke="#2e525c" stroke-width="4.2" opacity="0.8"/><line x1="1230.9" y1="300.7" x2="1239.2" y2="257.1" stroke="#0a0a0a" stroke-width="1.6" /><line x1="1281.1" y1="334.6" x2="1292.1" y2="290.0" stroke="#2e525c" stroke-width="4.2" opacity="0.8"/><line x1="1282.3" y1="334.6" x2="1293.3" y2="290.0" stroke="#0a0a0a" stroke-width="1.6" /><line x1="1337.4" y1="371.8" x2="1351.6" y2="326.2" stroke="#2e525c" stroke-width="4.2" opacity="0.8"/><line x1="1338.6" y1="371.8" x2="1352.8" y2="326.2" stroke="#0a0a0a" stroke-width="1.6" /><line x1="1399.3" y1="412.7" x2="1417.6" y2="366.3" stroke="#2e525c" stroke-width="4.2" opacity="0.8"/><line x1="1400.5" y1="412.7" x2="1418.8" y2="366.3" stroke="#0a0a0a" stroke-width="1.6" /><line x1="1467.8" y1="458.0" x2="1491.0" y2="411.0" stroke="#2e525c" stroke-width="4.2" opacity="0.8"/><line x1="1469.0" y1="458.0" x2="1492.2" y2="411.0" stroke="#0a0a0a" stroke-width="1.6" />
<polygon points="581.9,273.9 1104.1,173.6 1104.3,170.4 580.6,269.6" fill="#0a0a0a" /><polygon points="580.1,270.6 686.5,250.4 687.5,245.2 581.1,265.4" fill="#bb9164" stroke="#0a0a0a" stroke-width="0.8" stroke-linejoin="round" /><polygon points="681.3,251.4 774.9,233.6 775.9,228.4 682.3,246.2" fill="#bb9164" stroke="#0a0a0a" stroke-width="0.8" stroke-linejoin="round" /><polygon points="770.2,234.5 854.2,218.5 855.2,213.3 771.2,229.3" fill="#bb9164" stroke="#0a0a0a" stroke-width="0.8" stroke-linejoin="round" /><polygon points="849.9,219.3 925.7,204.9 926.7,199.7 850.9,214.1" fill="#bb9164" stroke="#0a0a0a" stroke-width="0.8" stroke-linejoin="round" /><polygon points="921.9,205.7 990.6,192.6 991.6,187.4 922.9,200.5" fill="#bb9164" stroke="#0a0a0a" stroke-width="0.8" stroke-linejoin="round" /><polygon points="987.2,193.3 1049.8,181.4 1050.8,176.2 988.2,188.1" fill="#bb9164" stroke="#0a0a0a" stroke-width="0.8" stroke-linejoin="round" /><polygon points="1046.6,182.0 1106.8,170.5 1107.8,165.3 1047.6,176.8" fill="#bb9164" stroke="#0a0a0a" stroke-width="0.8" stroke-linejoin="round" />
<polygon points="1103.4,173.5 1496.2,412.2 1498.1,408.4 1103.7,170.3" fill="#0a0a0a" /><polygon points="1103.3,170.8 1147.8,197.6 1152.6,194.0 1108.1,167.2" fill="#bb9164" stroke="#0a0a0a" stroke-width="0.8" stroke-linejoin="round" /><polygon points="1145.3,196.1 1193.1,225.0 1197.9,221.4 1150.1,192.5" fill="#bb9164" stroke="#0a0a0a" stroke-width="0.8" stroke-linejoin="round" /><polygon points="1190.4,223.4 1242.6,254.9 1247.4,251.3 1195.2,219.8" fill="#bb9164" stroke="#0a0a0a" stroke-width="0.8" stroke-linejoin="round" /><polygon points="1239.7,253.2 1297.0,287.8 1301.8,284.2 1244.5,249.6" fill="#bb9164" stroke="#0a0a0a" stroke-width="0.8" stroke-linejoin="round" /><polygon points="1293.8,285.9 1356.9,324.0 1361.7,320.4 1298.6,282.3" fill="#bb9164" stroke="#0a0a0a" stroke-width="0.8" stroke-linejoin="round" /><polygon points="1353.4,321.9 1423.3,364.1 1428.1,360.5 1358.2,318.3" fill="#bb9164" stroke="#0a0a0a" stroke-width="0.8" stroke-linejoin="round" /><polygon points="1419.4,361.8 1501.6,411.4 1506.4,407.8 1424.2,358.2" fill="#bb9164" stroke="#0a0a0a" stroke-width="0.8" stroke-linejoin="round" />
<polygon points="1046.2,447.9 1121.6,410.7 1156.0,438.4 1074.8,473.7" fill="#d3c8c8" />
<polygon points="1063.4,433.6 1126.4,415.5 1162.6,443.7 1102.5,469.9" fill="#d3c8c8" />
<polygon points="842.2,243.8 927.5,322.5 937.8,445.3 860.0,364.7" fill="#b6b6b6" stroke="#1a1a1a" stroke-width="0.8" stroke-linejoin="round" />
<polygon points="927.5,322.5 1169.4,256.9 1154.0,368.0 937.8,445.3" fill="#676d6d" stroke="#1a1a1a" stroke-width="0.8" stroke-linejoin="round" />
<polygon points="880.0,383.0 891.5,379.0 894.5,398.0 886.0,391.0" fill="#d3c8c8" stroke="#1a1a1a" stroke-width="0.5" stroke-linejoin="round" />
<line x1="851.1" y1="304.2" x2="932.6" y2="383.9" stroke="#1a1a1a" stroke-width="0.8" />
<line x1="851.6" y1="307.9" x2="933.0" y2="387.6" stroke="#1a1a1a" stroke-width="0.6" />
<polygon points="869.1,316.5 890.6,337.4 886.6,304.3 864.6,283.6" fill="#6b7171" stroke="#1a1a1a" stroke-width="0.8" stroke-linejoin="round" /><polygon points="869.1,316.5 874.8,321.0 870.6,289.3 864.6,283.6" fill="#9da1a1" stroke="#1a1a1a" stroke-width="0.6" stroke-linejoin="round" />
<polygon points="878.0,372.9 893.3,388.5 888.5,349.4 872.7,333.9" fill="#6b7171" stroke="#1a1a1a" stroke-width="0.8" stroke-linejoin="round" /><polygon points="878.0,372.9 882.1,376.0 877.1,338.1 872.7,333.9" fill="#9da1a1" stroke="#1a1a1a" stroke-width="0.6" stroke-linejoin="round" />
<polygon points="914.3,360.4 925.8,371.6 922.8,338.4 910.9,327.2" fill="#6b7171" stroke="#1a1a1a" stroke-width="0.8" stroke-linejoin="round" /><polygon points="914.3,360.4 919.9,364.7 916.8,332.8 910.9,327.2" fill="#9da1a1" stroke="#1a1a1a" stroke-width="0.6" stroke-linejoin="round" />
<polygon points="922.0,422.3 932.1,432.7 928.6,393.4 918.1,383.0" fill="#6b7171" stroke="#1a1a1a" stroke-width="0.8" stroke-linejoin="round" /><polygon points="922.0,422.3 926.9,426.2 923.3,388.1 918.1,383.0" fill="#9da1a1" stroke="#1a1a1a" stroke-width="0.6" stroke-linejoin="round" />
<polygon points="932.6,383.9 1159.6,311.8 1159.6,314.8 932.6,386.9" fill="#bfc2c2" stroke="#1a1a1a" stroke-width="0.6" stroke-linejoin="round" />
<polygon points="927.8,325.9 1168.8,260.0 1168.8,262.4 927.8,328.3" fill="#bfc2c2" stroke="#1a1a1a" stroke-width="0.6" stroke-linejoin="round" />
<polygon points="842.2,243.8 1073.8,196.9 1169.4,256.9 927.5,322.5" fill="#676d6d" />
<clipPath id="rc1"><polygon points="848.6,245.0 1073.4,199.1 1094.3,212.3 867.0,261.9"/></clipPath>
<g clip-path="url(#rc1)">
<polygon points="848.6,245.0 1073.4,199.1 1094.3,212.3 867.0,261.9" fill="#676d6d" />
<polygon points="882.7,238.0 901.6,254.3 907.6,314.1 889.5,297.4" fill="#b9b9b9" stroke="#1a1a1a" stroke-width="0.6" stroke-linejoin="round" />
<polygon points="919.1,230.6 938.5,246.3 942.3,305.0 923.8,289.0" fill="#b9b9b9" stroke="#1a1a1a" stroke-width="0.6" stroke-linejoin="round" />
<polygon points="953.6,223.6 973.4,238.6 975.4,296.4 956.6,280.9" fill="#b9b9b9" stroke="#1a1a1a" stroke-width="0.6" stroke-linejoin="round" />
<polygon points="986.5,216.9 1006.7,231.4 1006.8,288.1 987.8,273.1" fill="#b9b9b9" stroke="#1a1a1a" stroke-width="0.6" stroke-linejoin="round" />
<polygon points="1047.8,204.4 1068.5,217.9 1065.4,272.7 1046.0,258.7" fill="#b9b9b9" stroke="#1a1a1a" stroke-width="0.6" stroke-linejoin="round" />
<polygon points="1073.4,199.1 1094.3,212.3 1090.0,266.3 1070.4,252.7" fill="#b9b9b9" stroke="#1a1a1a" stroke-width="0.6" stroke-linejoin="round" />
</g>
<clipPath id="rc2"><polygon points="867.0,261.9 1094.3,212.3 1120.0,228.5 889.9,282.8"/></clipPath>
<g clip-path="url(#rc2)">
<polygon points="867.0,261.9 1094.3,212.3 1120.0,228.5 889.9,282.8" fill="#676d6d" />
<polygon points="1094.3,212.3 1120.0,228.5 1113.9,282.9 1090.0,266.3" fill="#b9b9b9" stroke="#1a1a1a" stroke-width="0.6" stroke-linejoin="round" />
</g>
<clipPath id="rc3"><polygon points="889.9,282.8 1120.0,228.5 1144.1,243.7 911.6,302.8"/></clipPath>
<g clip-path="url(#rc3)">
<polygon points="889.9,282.8 1120.0,228.5 1144.1,243.7 911.6,302.8" fill="#676d6d" />
<polygon points="925.1,274.5 947.4,293.7 951.1,354.0 930.0,334.7" fill="#b9b9b9" stroke="#1a1a1a" stroke-width="0.6" stroke-linejoin="round" />
<polygon points="962.5,265.7 985.3,284.1 986.5,343.4 965.1,324.8" fill="#b9b9b9" stroke="#1a1a1a" stroke-width="0.6" stroke-linejoin="round" />
<polygon points="997.9,257.3 1021.1,274.9 1020.2,333.3 998.5,315.4" fill="#b9b9b9" stroke="#1a1a1a" stroke-width="0.6" stroke-linejoin="round" />
<polygon points="1031.6,249.4 1055.1,266.3 1052.2,323.7 1030.2,306.5" fill="#b9b9b9" stroke="#1a1a1a" stroke-width="0.6" stroke-linejoin="round" />
<polygon points="1063.5,241.8 1087.3,258.1 1082.6,314.6 1060.4,298.0" fill="#b9b9b9" stroke="#1a1a1a" stroke-width="0.6" stroke-linejoin="round" />
<polygon points="1094.0,234.6 1118.0,250.3 1111.5,305.9 1089.2,289.9" fill="#b9b9b9" stroke="#1a1a1a" stroke-width="0.6" stroke-linejoin="round" />
<polygon points="1120.0,228.5 1144.1,243.7 1136.2,298.4 1113.9,282.9" fill="#b9b9b9" stroke="#1a1a1a" stroke-width="0.6" stroke-linejoin="round" />
</g>
<clipPath id="rc4"><polygon points="911.6,302.8 1144.1,243.7 1162.7,255.4 928.5,318.2"/></clipPath>
<g clip-path="url(#rc4)">
<polygon points="911.6,302.8 1144.1,243.7 1162.7,255.4 928.5,318.2" fill="#676d6d" />
<polygon points="1144.1,243.7 1162.7,255.4 1153.3,310.3 1136.2,298.4" fill="#b9b9b9" stroke="#1a1a1a" stroke-width="0.6" stroke-linejoin="round" />
</g>
<polygon points="999.4,222.9 1016.0,218.6 1016.0,248.7 999.4,255.0" fill="#676d6d" />
<polygon points="1007.4,234.4 1012.0,233.2 1012.0,250.4 1007.4,252.1" fill="#97a6b6" stroke="#1a1a1a" stroke-width="0.5" stroke-linejoin="round" />
<polygon points="1016.0,210.1 1034.6,222.9 1034.6,251.6 1016.0,238.7" fill="#b9b9b9" stroke="#1a1a1a" stroke-width="0.6" stroke-linejoin="round" />
<line x1="882.7" y1="238.0" x2="901.6" y2="254.3" stroke="#1a1a1a" stroke-width="3.0" stroke-linecap="butt"/><line x1="882.7" y1="238.0" x2="901.6" y2="254.3" stroke="#c6c6c4" stroke-width="1.6" stroke-linecap="butt"/>
<line x1="919.1" y1="230.6" x2="938.5" y2="246.3" stroke="#1a1a1a" stroke-width="3.0" stroke-linecap="butt"/><line x1="919.1" y1="230.6" x2="938.5" y2="246.3" stroke="#c6c6c4" stroke-width="1.6" stroke-linecap="butt"/>
<line x1="953.6" y1="223.6" x2="973.4" y2="238.6" stroke="#1a1a1a" stroke-width="3.0" stroke-linecap="butt"/><line x1="953.6" y1="223.6" x2="973.4" y2="238.6" stroke="#c6c6c4" stroke-width="1.6" stroke-linecap="butt"/>
<line x1="986.5" y1="216.9" x2="1006.7" y2="231.4" stroke="#1a1a1a" stroke-width="3.0" stroke-linecap="butt"/><line x1="986.5" y1="216.9" x2="1006.7" y2="231.4" stroke="#c6c6c4" stroke-width="1.6" stroke-linecap="butt"/>
<line x1="1047.8" y1="204.4" x2="1068.5" y2="217.9" stroke="#1a1a1a" stroke-width="3.0" stroke-linecap="butt"/><line x1="1047.8" y1="204.4" x2="1068.5" y2="217.9" stroke="#c6c6c4" stroke-width="1.6" stroke-linecap="butt"/>
<line x1="925.1" y1="274.5" x2="947.4" y2="293.7" stroke="#1a1a1a" stroke-width="3.0" stroke-linecap="butt"/><line x1="925.1" y1="274.5" x2="947.4" y2="293.7" stroke="#c6c6c4" stroke-width="1.6" stroke-linecap="butt"/>
<line x1="962.5" y1="265.7" x2="985.3" y2="284.1" stroke="#1a1a1a" stroke-width="3.0" stroke-linecap="butt"/><line x1="962.5" y1="265.7" x2="985.3" y2="284.1" stroke="#c6c6c4" stroke-width="1.6" stroke-linecap="butt"/>
<line x1="997.9" y1="257.3" x2="1021.1" y2="274.9" stroke="#1a1a1a" stroke-width="3.0" stroke-linecap="butt"/><line x1="997.9" y1="257.3" x2="1021.1" y2="274.9" stroke="#c6c6c4" stroke-width="1.6" stroke-linecap="butt"/>
<line x1="1031.6" y1="249.4" x2="1055.1" y2="266.3" stroke="#1a1a1a" stroke-width="3.0" stroke-linecap="butt"/><line x1="1031.6" y1="249.4" x2="1055.1" y2="266.3" stroke="#c6c6c4" stroke-width="1.6" stroke-linecap="butt"/>
<line x1="1063.5" y1="241.8" x2="1087.3" y2="258.1" stroke="#1a1a1a" stroke-width="3.0" stroke-linecap="butt"/><line x1="1063.5" y1="241.8" x2="1087.3" y2="258.1" stroke="#c6c6c4" stroke-width="1.6" stroke-linecap="butt"/>
<line x1="1094.0" y1="234.6" x2="1118.0" y2="250.3" stroke="#1a1a1a" stroke-width="3.0" stroke-linecap="butt"/><line x1="1094.0" y1="234.6" x2="1118.0" y2="250.3" stroke="#c6c6c4" stroke-width="1.6" stroke-linecap="butt"/>
<line x1="867.0" y1="261.9" x2="1009.7" y2="230.7" stroke="#1a1a1a" stroke-width="3.2" stroke-linecap="butt"/><line x1="867.0" y1="261.9" x2="1009.7" y2="230.7" stroke="#c6c6c4" stroke-width="1.8" stroke-linecap="butt"/>
<line x1="1026.5" y1="227.1" x2="1094.3" y2="212.3" stroke="#1a1a1a" stroke-width="3.2" stroke-linecap="butt"/><line x1="1026.5" y1="227.1" x2="1094.3" y2="212.3" stroke="#c6c6c4" stroke-width="1.8" stroke-linecap="butt"/>
<line x1="889.9" y1="282.8" x2="1120.0" y2="228.5" stroke="#1a1a1a" stroke-width="3.2" stroke-linecap="butt"/><line x1="889.9" y1="282.8" x2="1120.0" y2="228.5" stroke="#c6c6c4" stroke-width="1.8" stroke-linecap="butt"/>
<line x1="911.6" y1="302.8" x2="1144.1" y2="243.7" stroke="#1a1a1a" stroke-width="3.2" stroke-linecap="butt"/><line x1="911.6" y1="302.8" x2="1144.1" y2="243.7" stroke="#c6c6c4" stroke-width="1.8" stroke-linecap="butt"/>
<line x1="1006.1" y1="212.9" x2="1051.6" y2="244.6" stroke="#1a1a1a" stroke-width="3.0" stroke-linecap="butt"/><line x1="1006.1" y1="212.9" x2="1051.6" y2="244.6" stroke="#c6c6c4" stroke-width="1.6" stroke-linecap="butt"/>
<path d="M842.2,243.8 1073.8,196.9 1169.4,256.9 927.5,322.5Z M848.6,245.0 1073.4,199.1 1162.7,255.4 928.5,318.2Z" fill="#c4c5c3" fill-rule="evenodd" stroke="#1a1a1a" stroke-width="0.7"/>
<polygon points="1063.4,433.6 1126.4,415.5 1129.2,417.8 1066.3,436.1" fill="#3c4040" stroke="#1a1a1a" stroke-width="0.5" stroke-linejoin="round" />
<polygon points="1139.7,301.0 1156.0,308.6 1123.5,343.9 1112.1,335.3" fill="#9a9c9a" stroke="#1a1a1a" stroke-width="0.7" stroke-linejoin="round" /><line x1="1138.5" y1="302.6" x2="1154.5" y2="310.2" stroke="#141414" stroke-width="0.9" /><line x1="1137.2" y1="304.1" x2="1153.0" y2="311.8" stroke="#141414" stroke-width="0.9" /><line x1="1136.0" y1="305.7" x2="1151.5" y2="313.4" stroke="#141414" stroke-width="0.9" /><line x1="1134.7" y1="307.2" x2="1150.1" y2="315.0" stroke="#141414" stroke-width="0.9" /><line x1="1133.4" y1="308.8" x2="1148.6" y2="316.6" stroke="#141414" stroke-width="0.9" /><line x1="1132.2" y1="310.4" x2="1147.1" y2="318.3" stroke="#141414" stroke-width="0.9" /><line x1="1130.9" y1="311.9" x2="1145.6" y2="319.9" stroke="#141414" stroke-width="0.9" /><line x1="1129.7" y1="313.5" x2="1144.2" y2="321.5" stroke="#141414" stroke-width="0.9" /><line x1="1128.4" y1="315.0" x2="1142.7" y2="323.1" stroke="#141414" stroke-width="0.9" /><line x1="1127.2" y1="316.6" x2="1141.2" y2="324.7" stroke="#141414" stroke-width="0.9" /><line x1="1125.9" y1="318.2" x2="1139.7" y2="326.3" stroke="#141414" stroke-width="0.9" /><line x1="1124.6" y1="319.7" x2="1138.3" y2="327.9" stroke="#141414" stroke-width="0.9" /><line x1="1123.4" y1="321.3" x2="1136.8" y2="329.5" stroke="#141414" stroke-width="0.9" /><line x1="1122.1" y1="322.9" x2="1135.3" y2="331.1" stroke="#141414" stroke-width="0.9" /><line x1="1120.9" y1="324.4" x2="1133.8" y2="332.7" stroke="#141414" stroke-width="0.9" /><line x1="1119.6" y1="326.0" x2="1132.4" y2="334.3" stroke="#141414" stroke-width="0.9" /><line x1="1118.4" y1="327.5" x2="1130.9" y2="335.9" stroke="#141414" stroke-width="0.9" /><line x1="1117.1" y1="329.1" x2="1129.4" y2="337.5" stroke="#141414" stroke-width="0.9" /><line x1="1115.8" y1="330.7" x2="1127.9" y2="339.1" stroke="#141414" stroke-width="0.9" /><line x1="1114.6" y1="332.2" x2="1126.5" y2="340.7" stroke="#141414" stroke-width="0.9" /><line x1="1113.3" y1="333.8" x2="1125.0" y2="342.3" stroke="#141414" stroke-width="0.9" />
<polygon points="1091.1,345.8 1110.2,339.2 1132.1,362.1 1118.7,368.7" fill="#b4b4b4" stroke="#1a1a1a" stroke-width="0.7" stroke-linejoin="round" />
<polygon points="1124.5,354.4 1129.2,353.1 1164.5,378.3 1160.7,383.1" fill="#555" stroke="#1a1a1a" stroke-width="0.7" stroke-linejoin="round" /><line x1="1126.7" y1="356.2" x2="1131.4" y2="354.7" stroke="#141414" stroke-width="0.9" /><line x1="1129.0" y1="358.0" x2="1133.6" y2="356.2" stroke="#141414" stroke-width="0.9" /><line x1="1131.3" y1="359.8" x2="1135.9" y2="357.8" stroke="#141414" stroke-width="0.9" /><line x1="1133.5" y1="361.6" x2="1138.1" y2="359.4" stroke="#141414" stroke-width="0.9" /><line x1="1135.8" y1="363.4" x2="1140.3" y2="361.0" stroke="#141414" stroke-width="0.9" /><line x1="1138.1" y1="365.2" x2="1142.5" y2="362.5" stroke="#141414" stroke-width="0.9" /><line x1="1140.3" y1="367.0" x2="1144.7" y2="364.1" stroke="#141414" stroke-width="0.9" /><line x1="1142.6" y1="368.7" x2="1146.9" y2="365.7" stroke="#141414" stroke-width="0.9" /><line x1="1144.9" y1="370.5" x2="1149.1" y2="367.3" stroke="#141414" stroke-width="0.9" /><line x1="1147.1" y1="372.3" x2="1151.3" y2="368.8" stroke="#141414" stroke-width="0.9" /><line x1="1149.4" y1="374.1" x2="1153.5" y2="370.4" stroke="#141414" stroke-width="0.9" /><line x1="1151.7" y1="375.9" x2="1155.7" y2="372.0" stroke="#141414" stroke-width="0.9" /><line x1="1153.9" y1="377.7" x2="1157.9" y2="373.6" stroke="#141414" stroke-width="0.9" /><line x1="1156.2" y1="379.5" x2="1160.1" y2="375.1" stroke="#141414" stroke-width="0.9" /><line x1="1158.5" y1="381.3" x2="1162.3" y2="376.7" stroke="#141414" stroke-width="0.9" />
<polygon points="1119.7,371.6 1138.8,370.6 1060.5,454.6 1048.1,446.0" fill="#9a9c9a" stroke="#1a1a1a" stroke-width="0.7" stroke-linejoin="round" /><line x1="1117.6" y1="373.8" x2="1136.5" y2="373.1" stroke="#141414" stroke-width="0.9" /><line x1="1115.5" y1="376.0" x2="1134.2" y2="375.6" stroke="#141414" stroke-width="0.9" /><line x1="1113.4" y1="378.2" x2="1131.9" y2="378.1" stroke="#141414" stroke-width="0.9" /><line x1="1111.3" y1="380.4" x2="1129.6" y2="380.5" stroke="#141414" stroke-width="0.9" /><line x1="1109.2" y1="382.5" x2="1127.3" y2="383.0" stroke="#141414" stroke-width="0.9" /><line x1="1107.1" y1="384.7" x2="1125.0" y2="385.5" stroke="#141414" stroke-width="0.9" /><line x1="1105.0" y1="386.9" x2="1122.7" y2="387.9" stroke="#141414" stroke-width="0.9" /><line x1="1102.9" y1="389.1" x2="1120.4" y2="390.4" stroke="#141414" stroke-width="0.9" /><line x1="1100.8" y1="391.3" x2="1118.1" y2="392.9" stroke="#141414" stroke-width="0.9" /><line x1="1098.6" y1="393.5" x2="1115.8" y2="395.3" stroke="#141414" stroke-width="0.9" /><line x1="1096.5" y1="395.7" x2="1113.5" y2="397.8" stroke="#141414" stroke-width="0.9" /><line x1="1094.4" y1="397.9" x2="1111.2" y2="400.3" stroke="#141414" stroke-width="0.9" /><line x1="1092.3" y1="400.1" x2="1108.9" y2="402.8" stroke="#141414" stroke-width="0.9" /><line x1="1090.2" y1="402.2" x2="1106.6" y2="405.2" stroke="#141414" stroke-width="0.9" /><line x1="1088.1" y1="404.4" x2="1104.3" y2="407.7" stroke="#141414" stroke-width="0.9" /><line x1="1086.0" y1="406.6" x2="1102.0" y2="410.2" stroke="#141414" stroke-width="0.9" /><line x1="1083.9" y1="408.8" x2="1099.7" y2="412.6" stroke="#141414" stroke-width="0.9" /><line x1="1081.8" y1="411.0" x2="1097.4" y2="415.1" stroke="#141414" stroke-width="0.9" /><line x1="1079.7" y1="413.2" x2="1095.1" y2="417.6" stroke="#141414" stroke-width="0.9" /><line x1="1077.6" y1="415.4" x2="1092.8" y2="420.0" stroke="#141414" stroke-width="0.9" /><line x1="1075.5" y1="417.6" x2="1090.5" y2="422.5" stroke="#141414" stroke-width="0.9" /><line x1="1073.4" y1="419.8" x2="1088.1" y2="425.0" stroke="#141414" stroke-width="0.9" /><line x1="1071.3" y1="422.0" x2="1085.8" y2="427.5" stroke="#141414" stroke-width="0.9" /><line x1="1069.2" y1="424.1" x2="1083.5" y2="429.9" stroke="#141414" stroke-width="0.9" /><line x1="1067.1" y1="426.3" x2="1081.2" y2="432.4" stroke="#141414" stroke-width="0.9" /><line x1="1065.0" y1="428.5" x2="1078.9" y2="434.9" stroke="#141414" stroke-width="0.9" /><line x1="1062.9" y1="430.7" x2="1076.6" y2="437.3" stroke="#141414" stroke-width="0.9" /><line x1="1060.8" y1="432.9" x2="1074.3" y2="439.8" stroke="#141414" stroke-width="0.9" /><line x1="1058.7" y1="435.1" x2="1072.0" y2="442.3" stroke="#141414" stroke-width="0.9" /><line x1="1056.5" y1="437.3" x2="1069.7" y2="444.7" stroke="#141414" stroke-width="0.9" /><line x1="1054.4" y1="439.5" x2="1067.4" y2="447.2" stroke="#141414" stroke-width="0.9" /><line x1="1052.3" y1="441.7" x2="1065.1" y2="449.7" stroke="#141414" stroke-width="0.9" /><line x1="1050.2" y1="443.8" x2="1062.8" y2="452.1" stroke="#141414" stroke-width="0.9" />
<polygon points="1085.3,404.0 1101.0,401.8 1109.2,410.2 1094.5,414.0" fill="#b0b0b0" stroke="#1a1a1a" stroke-width="0.6" stroke-linejoin="round" />
<polygon points="1121.6,420.3 1134.0,425.0 1102.5,461.3 1091.1,454.6" fill="#9a9c9a" stroke="#1a1a1a" stroke-width="0.7" stroke-linejoin="round" /><line x1="1120.1" y1="422.0" x2="1132.4" y2="426.9" stroke="#141414" stroke-width="0.9" /><line x1="1118.5" y1="423.7" x2="1130.9" y2="428.7" stroke="#141414" stroke-width="0.9" /><line x1="1117.0" y1="425.4" x2="1129.3" y2="430.5" stroke="#141414" stroke-width="0.9" /><line x1="1115.5" y1="427.1" x2="1127.7" y2="432.3" stroke="#141414" stroke-width="0.9" /><line x1="1114.0" y1="428.9" x2="1126.1" y2="434.1" stroke="#141414" stroke-width="0.9" /><line x1="1112.4" y1="430.6" x2="1124.6" y2="435.9" stroke="#141414" stroke-width="0.9" /><line x1="1110.9" y1="432.3" x2="1123.0" y2="437.7" stroke="#141414" stroke-width="0.9" /><line x1="1109.4" y1="434.0" x2="1121.4" y2="439.5" stroke="#141414" stroke-width="0.9" /><line x1="1107.9" y1="435.7" x2="1119.8" y2="441.4" stroke="#141414" stroke-width="0.9" /><line x1="1106.3" y1="437.4" x2="1118.3" y2="443.2" stroke="#141414" stroke-width="0.9" /><line x1="1104.8" y1="439.2" x2="1116.7" y2="445.0" stroke="#141414" stroke-width="0.9" /><line x1="1103.3" y1="440.9" x2="1115.1" y2="446.8" stroke="#141414" stroke-width="0.9" /><line x1="1101.8" y1="442.6" x2="1113.5" y2="448.6" stroke="#141414" stroke-width="0.9" /><line x1="1100.2" y1="444.3" x2="1112.0" y2="450.4" stroke="#141414" stroke-width="0.9" /><line x1="1098.7" y1="446.0" x2="1110.4" y2="452.2" stroke="#141414" stroke-width="0.9" /><line x1="1097.2" y1="447.7" x2="1108.8" y2="454.0" stroke="#141414" stroke-width="0.9" /><line x1="1095.6" y1="449.5" x2="1107.2" y2="455.9" stroke="#141414" stroke-width="0.9" /><line x1="1094.1" y1="451.2" x2="1105.7" y2="457.7" stroke="#141414" stroke-width="0.9" /><line x1="1092.6" y1="452.9" x2="1104.1" y2="459.5" stroke="#141414" stroke-width="0.9" />
<polygon points="1080.0,459.4 1087.3,456.5 1095.8,464.7 1088.2,468.0" fill="#b0b0b0" stroke="#1a1a1a" stroke-width="0.6" stroke-linejoin="round" />
<polygon points="1072.9,468.0 1080.0,459.4 1088.2,468.0 1080.0,472.7" fill="#9a9c9a" stroke="#1a1a1a" stroke-width="0.7" stroke-linejoin="round" /><line x1="1074.4" y1="468.9" x2="1081.6" y2="461.1" stroke="#141414" stroke-width="0.9" /><line x1="1075.8" y1="469.9" x2="1083.3" y2="462.8" stroke="#141414" stroke-width="0.9" /><line x1="1077.2" y1="470.8" x2="1084.9" y2="464.5" stroke="#141414" stroke-width="0.9" /><line x1="1078.6" y1="471.8" x2="1086.6" y2="466.3" stroke="#141414" stroke-width="0.9" />
<clipPath id="clFL"><polygon points="500,200 905,200 905,835 500,835"/></clipPath><g clip-path="url(#clFL)">
<polygon points="583.1,329.7 888.0,813.0 910.0,799.5 621.8,327.7" fill="#bb9164" stroke="#0a0a0a" stroke-width="1" stroke-linejoin="round" />
<line x1="625.6" y1="392.7" x2="630.1" y2="389.7" stroke="#0a0a0a" stroke-width="0.8" />
<line x1="669.5" y1="461.8" x2="674.0" y2="458.8" stroke="#0a0a0a" stroke-width="0.8" />
<line x1="712.5" y1="530.8" x2="717.0" y2="527.8" stroke="#0a0a0a" stroke-width="0.8" />
<line x1="755.4" y1="599.9" x2="759.9" y2="596.9" stroke="#0a0a0a" stroke-width="0.8" />
<line x1="798.4" y1="668.9" x2="802.9" y2="665.9" stroke="#0a0a0a" stroke-width="0.8" />
<line x1="841.4" y1="738.0" x2="845.9" y2="735.0" stroke="#0a0a0a" stroke-width="0.8" />
<polygon points="578.8,315.6 887.1,799.8 909.1,786.3 612.2,313.6" fill="#bb9164" stroke="#0a0a0a" stroke-width="1" stroke-linejoin="round" />
<line x1="629.3" y1="390.8" x2="633.8" y2="387.8" stroke="#0a0a0a" stroke-width="0.8" />
<line x1="673.5" y1="459.9" x2="678.0" y2="456.9" stroke="#0a0a0a" stroke-width="0.8" />
<line x1="717.0" y1="529.1" x2="721.5" y2="526.1" stroke="#0a0a0a" stroke-width="0.8" />
<line x1="760.4" y1="598.3" x2="764.9" y2="595.3" stroke="#0a0a0a" stroke-width="0.8" />
<line x1="803.9" y1="667.5" x2="808.4" y2="664.5" stroke="#0a0a0a" stroke-width="0.8" />
<line x1="847.4" y1="736.6" x2="851.9" y2="733.6" stroke="#0a0a0a" stroke-width="0.8" />
<polygon points="574.5,301.5 886.0,786.7 908.0,773.2 602.5,299.5" fill="#bb9164" stroke="#0a0a0a" stroke-width="1" stroke-linejoin="round" />
<line x1="617.6" y1="364.8" x2="622.1" y2="361.8" stroke="#0a0a0a" stroke-width="0.8" />
<line x1="662.0" y1="434.1" x2="666.5" y2="431.1" stroke="#0a0a0a" stroke-width="0.8" />
<line x1="706.2" y1="503.4" x2="710.7" y2="500.4" stroke="#0a0a0a" stroke-width="0.8" />
<line x1="750.2" y1="572.8" x2="754.7" y2="569.8" stroke="#0a0a0a" stroke-width="0.8" />
<line x1="794.2" y1="642.1" x2="798.7" y2="639.1" stroke="#0a0a0a" stroke-width="0.8" />
<line x1="838.2" y1="711.4" x2="842.7" y2="708.4" stroke="#0a0a0a" stroke-width="0.8" />
<polygon points="569.8,287.0 883.8,772.0 905.8,758.5 592.6,285.0" fill="#bb9164" stroke="#0a0a0a" stroke-width="1" stroke-linejoin="round" />
<line x1="620.8" y1="362.3" x2="625.3" y2="359.3" stroke="#0a0a0a" stroke-width="0.8" />
<line x1="665.4" y1="431.6" x2="669.9" y2="428.6" stroke="#0a0a0a" stroke-width="0.8" />
<line x1="710.0" y1="500.9" x2="714.5" y2="497.9" stroke="#0a0a0a" stroke-width="0.8" />
<line x1="754.4" y1="570.1" x2="758.9" y2="567.1" stroke="#0a0a0a" stroke-width="0.8" />
<line x1="798.8" y1="639.4" x2="803.3" y2="636.4" stroke="#0a0a0a" stroke-width="0.8" />
<line x1="843.2" y1="708.7" x2="847.7" y2="705.7" stroke="#0a0a0a" stroke-width="0.8" />
<polygon points="564.7,272.0 881.4,757.3 903.4,743.8 576.3,270.0" fill="#bb9164" stroke="#0a0a0a" stroke-width="1" stroke-linejoin="round" />
<line x1="620.5" y1="331.3" x2="614.0" y2="336.8" stroke="#0a0a0a" stroke-width="0.8" />
<line x1="668.0" y1="400.7" x2="660.0" y2="406.2" stroke="#0a0a0a" stroke-width="0.8" />
<line x1="715.1" y1="470.0" x2="705.9" y2="475.5" stroke="#0a0a0a" stroke-width="0.8" />
<line x1="760.7" y1="539.3" x2="751.1" y2="544.8" stroke="#0a0a0a" stroke-width="0.8" />
<line x1="806.4" y1="608.6" x2="796.3" y2="614.1" stroke="#0a0a0a" stroke-width="0.8" />
<line x1="852.0" y1="678.0" x2="841.5" y2="683.5" stroke="#0a0a0a" stroke-width="0.8" />
</g>
<polygon points="575.3,268.5 624.2,340.0 709.7,465.0 861.0,695.0 895.2,747.0 900.0,745.0 905.5,739.0 876.6,695.0 725.5,465.0 633.7,340.0 584.1,272.5" fill="#0a0a0a" />
<polygon points="578.1,271.5 624.9,340.0 710.4,465.0 861.7,695.0 895.9,747.0 901.1,747.0 866.8,695.0 715.0,465.0 627.6,340.0 579.7,271.5" fill="#6fa3b6" />
<polyline points="582.8,274.5 629.3,340.0" fill="none" stroke="#d5e0e3" stroke-width="0.7" />
<polyline points="629.3,340.0 717.9,465.0" fill="none" stroke="#e4edef" stroke-width="1.0" />
<polyline points="717.9,465.0 869.5,695.0 899.8,741.0" fill="none" stroke="#e4edef" stroke-width="1.3" />
<polyline points="584.2,274.5 631.4,340.0" fill="none" stroke="#d5e0e3" stroke-width="0.7" />
<polyline points="631.4,340.0 721.5,465.0" fill="none" stroke="#e4edef" stroke-width="1.0" />
<polyline points="721.5,465.0 872.9,695.0 903.2,741.0" fill="none" stroke="#e4edef" stroke-width="1.3" />
<line x1="606.9" y1="312.6" x2="622.1" y2="332.6" stroke="#274550" stroke-width="2.6" opacity="0.85"/>
<line x1="607.7" y1="311.6" x2="613.3" y2="313.6" stroke="#0a0a0a" stroke-width="2.4" />
<line x1="639.9" y1="360.7" x2="655.7" y2="380.7" stroke="#274550" stroke-width="2.6" opacity="0.85"/>
<line x1="641.4" y1="359.7" x2="648.7" y2="361.7" stroke="#0a0a0a" stroke-width="2.4" />
<line x1="677.5" y1="415.7" x2="694.0" y2="435.7" stroke="#274550" stroke-width="2.6" opacity="0.85"/>
<line x1="679.8" y1="414.7" x2="689.0" y2="416.7" stroke="#0a0a0a" stroke-width="2.4" />
<line x1="720.4" y1="478.9" x2="736.9" y2="498.9" stroke="#274550" stroke-width="2.6" opacity="0.85"/>
<line x1="723.6" y1="477.9" x2="734.3" y2="479.9" stroke="#0a0a0a" stroke-width="2.4" />
<line x1="768.8" y1="552.5" x2="785.5" y2="572.5" stroke="#274550" stroke-width="2.6" opacity="0.85"/>
<line x1="772.1" y1="551.5" x2="782.7" y2="553.5" stroke="#0a0a0a" stroke-width="2.4" />
<line x1="825.9" y1="639.3" x2="842.7" y2="659.3" stroke="#274550" stroke-width="2.6" opacity="0.85"/>
<line x1="829.4" y1="638.3" x2="839.7" y2="640.3" stroke="#0a0a0a" stroke-width="2.4" />
<polygon points="905.0,751.0 1497.0,410.0 1481.0,464.0 919.3,817.2 906.0,806.2" fill="#bb9164" stroke="#0a0a0a" stroke-width="1" stroke-linejoin="round" />
<line x1="988.3" y1="773.8" x2="980.1" y2="765.8" stroke="#0a0a0a" stroke-width="0.8" />
<line x1="1068.6" y1="723.3" x2="1061.2" y2="715.6" stroke="#0a0a0a" stroke-width="0.8" />
<line x1="1148.8" y1="672.9" x2="1142.3" y2="665.5" stroke="#0a0a0a" stroke-width="0.8" />
<line x1="1229.0" y1="622.4" x2="1223.4" y2="615.4" stroke="#0a0a0a" stroke-width="0.8" />
<line x1="1309.3" y1="572.0" x2="1304.5" y2="565.2" stroke="#0a0a0a" stroke-width="0.8" />
<line x1="1389.5" y1="521.5" x2="1385.6" y2="515.1" stroke="#0a0a0a" stroke-width="0.8" />
<polygon points="905.0,751.0 1497.0,410.0 1486.0,453.0 918.3,804.0 906.0,793.0" fill="#bb9164" stroke="#0a0a0a" stroke-width="1" stroke-linejoin="round" />
<line x1="1010.8" y1="746.8" x2="1001.9" y2="738.2" stroke="#0a0a0a" stroke-width="0.8" />
<line x1="1091.9" y1="696.7" x2="1084.2" y2="688.2" stroke="#0a0a0a" stroke-width="0.8" />
<line x1="1173.0" y1="646.6" x2="1166.4" y2="638.1" stroke="#0a0a0a" stroke-width="0.8" />
<line x1="1254.1" y1="596.4" x2="1248.7" y2="588.1" stroke="#0a0a0a" stroke-width="0.8" />
<line x1="1335.2" y1="546.3" x2="1330.9" y2="538.0" stroke="#0a0a0a" stroke-width="0.8" />
<line x1="1416.3" y1="496.1" x2="1413.2" y2="488.0" stroke="#0a0a0a" stroke-width="0.8" />
<polygon points="905.0,751.0 1497.0,410.0 1492.0,440.0 916.2,790.4 906.0,779.4" fill="#bb9164" stroke="#0a0a0a" stroke-width="1" stroke-linejoin="round" />
<line x1="986.9" y1="747.4" x2="977.7" y2="737.9" stroke="#0a0a0a" stroke-width="0.8" />
<line x1="1069.2" y1="697.3" x2="1061.3" y2="688.2" stroke="#0a0a0a" stroke-width="0.8" />
<line x1="1151.5" y1="647.2" x2="1144.8" y2="638.5" stroke="#0a0a0a" stroke-width="0.8" />
<line x1="1233.7" y1="597.2" x2="1228.4" y2="588.8" stroke="#0a0a0a" stroke-width="0.8" />
<line x1="1316.0" y1="547.1" x2="1312.0" y2="539.2" stroke="#0a0a0a" stroke-width="0.8" />
<line x1="1398.2" y1="497.1" x2="1395.5" y2="489.5" stroke="#0a0a0a" stroke-width="0.8" />
<polygon points="905.0,751.0 1497.0,410.0 1499.0,428.0 914.0,775.7 906.0,764.7" fill="#bb9164" stroke="#0a0a0a" stroke-width="1" stroke-linejoin="round" />
<line x1="1009.3" y1="719.1" x2="1000.4" y2="709.9" stroke="#0a0a0a" stroke-width="0.8" />
<line x1="1092.8" y1="669.4" x2="1085.3" y2="660.4" stroke="#0a0a0a" stroke-width="0.8" />
<line x1="1176.4" y1="619.7" x2="1170.1" y2="610.9" stroke="#0a0a0a" stroke-width="0.8" />
<line x1="1260.0" y1="570.1" x2="1255.0" y2="561.4" stroke="#0a0a0a" stroke-width="0.8" />
<line x1="1343.6" y1="520.4" x2="1339.8" y2="511.9" stroke="#0a0a0a" stroke-width="0.8" />
<line x1="1427.1" y1="470.7" x2="1424.7" y2="462.4" stroke="#0a0a0a" stroke-width="0.8" />
<polygon points="905.0,751.0 1497.0,410.0 1506.0,415.0 912.0,761.5 906.0,750.5" fill="#bb9164" stroke="#0a0a0a" stroke-width="1" stroke-linejoin="round" />
<line x1="985.0" y1="718.9" x2="973.3" y2="715.1" stroke="#0a0a0a" stroke-width="0.8" />
<line x1="1069.8" y1="669.4" x2="1058.0" y2="666.2" stroke="#0a0a0a" stroke-width="0.8" />
<line x1="1154.7" y1="619.9" x2="1142.6" y2="617.3" stroke="#0a0a0a" stroke-width="0.8" />
<line x1="1239.5" y1="570.4" x2="1227.3" y2="568.4" stroke="#0a0a0a" stroke-width="0.8" />
<line x1="1324.4" y1="520.9" x2="1311.9" y2="519.5" stroke="#0a0a0a" stroke-width="0.8" />
<line x1="1409.3" y1="471.4" x2="1396.5" y2="470.6" stroke="#0a0a0a" stroke-width="0.8" />
<polygon points="899.7,744.0 1493.8,407.5 1497.0,410.0 905.0,751.0" fill="#0a0a0a" />
<polygon points="902.6,747.9 1495.5,408.9 1497.0,409.7 905.0,750.7" fill="#5b8c9e" />
<line x1="901.2" y1="746.0" x2="1494.7" y2="408.2" stroke="#e3ecee" stroke-width="1.2" stroke-dasharray="1.3 1.3"/>
<line x1="1032.2" y1="668.5" x2="1036.4" y2="676.2" stroke="#0a0a0a" stroke-width="2.2" />
<line x1="1141.9" y1="606.3" x2="1145.7" y2="613.2" stroke="#0a0a0a" stroke-width="2.2" />
<line x1="1234.4" y1="553.9" x2="1237.9" y2="560.1" stroke="#0a0a0a" stroke-width="2.2" />
<line x1="1313.4" y1="509.1" x2="1316.7" y2="514.7" stroke="#0a0a0a" stroke-width="2.2" />
<line x1="1381.8" y1="470.4" x2="1384.8" y2="475.5" stroke="#0a0a0a" stroke-width="2.2" />
<line x1="1441.4" y1="436.6" x2="1444.3" y2="441.2" stroke="#0a0a0a" stroke-width="2.2" />
<polygon points="897.8,748.0 902.5,747.0 907.0,812.0 902.3,812.6" fill="#bb9164" stroke="#0a0a0a" stroke-width="0.9" stroke-linejoin="round" />
<line x1="902.5" y1="748.0" x2="906.5" y2="798.0" stroke="#0a0a0a" stroke-width="2.2" />
<circle cx="899.8" cy="745.5" r="2.2" fill="#0a0a0a"/>
<polyline points="602.8,327.0 1100.5,214.5 1469.0,458.0 909.0,800.0 602.8,327.0" fill="none" stroke="#fdf529" stroke-width="2" />
<line x1="860.0" y1="364.7" x2="1067.8" y2="303.8" stroke="#fdf529" stroke-width="1.6" />
<line x1="1067.8" y1="303.8" x2="1149.7" y2="366.6" stroke="#fdf529" stroke-width="1.6" />
<line x1="1149.7" y1="366.6" x2="937.8" y2="445.3" stroke="#fdf529" stroke-width="1.6" />
<line x1="937.8" y1="445.3" x2="860.0" y2="364.7" stroke="#fdf529" stroke-width="1.6" />
<line x1="875.4" y1="380.7" x2="1003.0" y2="341.4" stroke="#fdf529" stroke-width="1.6" />
<line x1="1031.3" y1="332.7" x2="1084.2" y2="316.3" stroke="#fdf529" stroke-width="1.6" />
<line x1="895.6" y1="401.6" x2="1105.5" y2="332.7" stroke="#fdf529" stroke-width="1.6" />
<line x1="915.8" y1="422.5" x2="1126.8" y2="349.0" stroke="#fdf529" stroke-width="1.6" />
<line x1="926.4" y1="345.2" x2="942.3" y2="360.1" stroke="#fdf529" stroke-width="1.6" />
<line x1="957.3" y1="336.2" x2="973.3" y2="350.5" stroke="#fdf529" stroke-width="1.6" />
<line x1="986.8" y1="327.5" x2="1003.0" y2="341.4" stroke="#fdf529" stroke-width="1.6" />
<line x1="1015.0" y1="319.2" x2="1031.3" y2="332.7" stroke="#fdf529" stroke-width="1.6" />
<line x1="1042.0" y1="311.3" x2="1058.3" y2="324.3" stroke="#fdf529" stroke-width="1.6" />
<line x1="930.1" y1="390.2" x2="950.6" y2="410.4" stroke="#fdf529" stroke-width="1.6" />
<line x1="963.0" y1="379.5" x2="983.7" y2="398.8" stroke="#fdf529" stroke-width="1.6" />
<line x1="994.2" y1="369.2" x2="1015.1" y2="387.9" stroke="#fdf529" stroke-width="1.6" />
<line x1="1024.0" y1="359.5" x2="1045.0" y2="377.5" stroke="#fdf529" stroke-width="1.6" />
<line x1="1052.4" y1="350.1" x2="1073.5" y2="367.5" stroke="#fdf529" stroke-width="1.6" />
<line x1="1079.6" y1="341.2" x2="1100.8" y2="358.0" stroke="#fdf529" stroke-width="1.6" />
<rect x="1001.5" y="339.9" width="3" height="3" fill="#fdf529"/>
<rect x="894.1" y="400.1" width="3" height="3" fill="#fdf529"/>
<rect x="1029.8" y="331.2" width="3" height="3" fill="#fdf529"/>
<rect x="1022.5" y="358.0" width="3" height="3" fill="#fdf529"/>
<rect x="1056.8" y="322.8" width="3" height="3" fill="#fdf529"/>
<rect x="971.8" y="349.0" width="3" height="3" fill="#fdf529"/>
<rect x="928.6" y="388.7" width="3" height="3" fill="#fdf529"/>
<rect x="1066.3" y="302.2" width="3" height="3" fill="#fdf529"/>
<rect x="1050.9" y="348.6" width="3" height="3" fill="#fdf529"/>
<rect x="1078.1" y="339.7" width="3" height="3" fill="#fdf529"/>
<rect x="992.7" y="367.7" width="3" height="3" fill="#fdf529"/>
<rect x="961.5" y="378.0" width="3" height="3" fill="#fdf529"/>
<rect x="1082.7" y="314.8" width="3" height="3" fill="#fdf529"/>
<rect x="982.2" y="397.3" width="3" height="3" fill="#fdf529"/>
<rect x="1104.0" y="331.2" width="3" height="3" fill="#fdf529"/>
<rect x="914.3" y="421.0" width="3" height="3" fill="#fdf529"/>
<rect x="936.3" y="443.8" width="3" height="3" fill="#fdf529"/>
<rect x="1043.5" y="376.0" width="3" height="3" fill="#fdf529"/>
<rect x="949.1" y="408.9" width="3" height="3" fill="#fdf529"/>
<rect x="1072.0" y="366.0" width="3" height="3" fill="#fdf529"/>
<rect x="1099.2" y="356.6" width="3" height="3" fill="#fdf529"/>
<rect x="1013.6" y="386.4" width="3" height="3" fill="#fdf529"/>
<rect x="924.9" y="343.7" width="3" height="3" fill="#fdf529"/>
<rect x="858.5" y="363.2" width="3" height="3" fill="#fdf529"/>
<rect x="1148.2" y="365.1" width="3" height="3" fill="#fdf529"/>
<rect x="940.8" y="358.6" width="3" height="3" fill="#fdf529"/>
<rect x="1125.3" y="347.5" width="3" height="3" fill="#fdf529"/>
<rect x="985.3" y="326.0" width="3" height="3" fill="#fdf529"/>
<rect x="1013.5" y="317.7" width="3" height="3" fill="#fdf529"/>
<rect x="873.9" y="379.2" width="3" height="3" fill="#fdf529"/>
<rect x="1040.5" y="309.8" width="3" height="3" fill="#fdf529"/>
<rect x="955.8" y="334.7" width="3" height="3" fill="#fdf529"/>
<polyline points="1046.2,447.9 1121.6,410.7 1156.0,438.4 1074.8,473.7 1046.2,447.9" fill="none" stroke="#fdf529" stroke-width="1.6" />
<rect x="1044.7" y="446.4" width="3" height="3" fill="#fdf529"/>
<rect x="1120.1" y="409.2" width="3" height="3" fill="#fdf529"/>
<rect x="1154.5" y="436.9" width="3" height="3" fill="#fdf529"/>
<rect x="1073.3" y="472.2" width="3" height="3" fill="#fdf529"/>
<polyline points="1063.4,433.6 1126.4,415.5 1162.6,443.7 1102.5,469.9 1063.4,433.6" fill="none" stroke="#fdf529" stroke-width="1.6" />
<rect x="1061.9" y="432.1" width="3" height="3" fill="#fdf529"/>
<rect x="1124.9" y="414.0" width="3" height="3" fill="#fdf529"/>
<rect x="1161.1" y="442.2" width="3" height="3" fill="#fdf529"/>
<rect x="1101.0" y="468.4" width="3" height="3" fill="#fdf529"/>
<rect x="600.8" y="325.0" width="4" height="4" fill="#fdf529"/>
<rect x="1098.5" y="212.5" width="4" height="4" fill="#fdf529"/>
<rect x="1467.0" y="456.0" width="4" height="4" fill="#fdf529"/>
<rect x="907.0" y="798.0" width="4" height="4" fill="#fdf529"/>
<g shape-rendering="geometricPrecision">
<polygon points="1848.0,143.0 1836.1,156.3 1859.9,156.3" fill="#d6cecd" stroke="#4c4848" stroke-width="0.8" stroke-linejoin="round"/>
<polygon points="1848.0,274.7 1836.1,261.5 1859.9,261.5" fill="#d6cecd" stroke="#4c4848" stroke-width="0.8" stroke-linejoin="round"/>
<polygon points="1782.2,208.6 1795.8,197.1 1795.8,220.7" fill="#d6cecd" stroke="#4c4848" stroke-width="0.8" stroke-linejoin="round"/>
<polygon points="1913.8,208.6 1900.5,197.1 1900.5,220.7" fill="#d6cecd" stroke="#4c4848" stroke-width="0.8" stroke-linejoin="round"/>
<circle cx="1905.3" cy="151.3" r="6.7" fill="#d6cecd" stroke="#4c4848" stroke-width="0.8"/>
<polygon points="1829.4,150.2 1830.8,157.8 1818.7,163.5 1810.8,170.6 1811.5,174.9 1798.6,177.8 1800.8,163.2 1804.1,167.1 1812.9,158.5 1823.0,152.7" fill="#d6cecd" stroke="#4c4848" stroke-width="0.8" stroke-linejoin="round"/>
<polygon points="1866.6,150.2 1865.2,157.8 1877.3,163.5 1885.2,170.6 1884.5,174.9 1897.4,177.8 1895.2,163.2 1891.9,167.1 1883.1,158.5 1873.0,152.7" fill="#d6cecd" stroke="#4c4848" stroke-width="0.8" stroke-linejoin="round"/>
<polygon points="1823.0,177.5 1848.0,170.6 1858.0,171.3 1882.4,188.5 1887.4,202.1 1886.6,208.6 1876.6,232.9 1854.4,247.9 1835.1,246.5 1815.8,225.7 1811.5,214.3 1810.5,195.0 1815.1,188.5" fill="#d6cecd" stroke="#4c4848" stroke-width="0.8" stroke-linejoin="round"/>
<polyline points="1820.8,182.8 1843.0,202.8 1857.3,203.6 1882.4,188.5" fill="none" stroke="#4c4848" stroke-width="0.8" stroke-linejoin="round"/>
<polyline points="1810.8,195.0 1835.8,212.9 1840.4,224.3 1837.3,246.5" fill="none" stroke="#4c4848" stroke-width="0.8" stroke-linejoin="round"/>
<polyline points="1843.0,202.8 1835.8,212.9" fill="none" stroke="#4c4848" stroke-width="0.8" stroke-linejoin="round"/>
<polyline points="1857.3,203.6 1860.9,215.7 1886.6,202.8" fill="none" stroke="#4c4848" stroke-width="0.8" stroke-linejoin="round"/>
<polyline points="1860.9,215.7 1853.0,225.7 1840.4,224.3" fill="none" stroke="#4c4848" stroke-width="0.8" stroke-linejoin="round"/>
<polyline points="1853.0,225.7 1848.0,247.9" fill="none" stroke="#4c4848" stroke-width="0.8" stroke-linejoin="round"/>
<polyline points="1823.0,177.5 1820.8,182.8 1810.8,195.0" fill="none" stroke="#4c4848" stroke-width="0.8" stroke-linejoin="round"/>
<polyline points="1882.4,188.5 1886.6,202.8" fill="none" stroke="#4c4848" stroke-width="0.8" stroke-linejoin="round"/>
<text x="0" y="0" transform="translate(1850.4,188.5) rotate(-17) skewX(-25)" font-family="Liberation Sans, sans-serif" font-size="10.5" fill="#8f8a8a" text-anchor="middle" letter-spacing="0">TOP</text>
<text x="0" y="0" transform="translate(1821.8,222.9) rotate(52) skewX(-18)" font-family="Liberation Sans, sans-serif" font-size="9.5" fill="#8f8a8a" text-anchor="middle" letter-spacing="0">LEFT</text>
<text x="0" y="0" transform="translate(1867.8,233.2) rotate(-30) skewX(-18)" font-family="Liberation Sans, sans-serif" font-size="8.3" fill="#8f8a8a" text-anchor="middle" letter-spacing="0">FRONT</text>
<line x1="1840.1" y1="265.1" x2="1813.7" y2="232.6" stroke="#5fc65f" stroke-width="1.1"/>
<line x1="1840.1" y1="265.1" x2="1873.0" y2="241.8" stroke="#c86464" stroke-width="1.1"/>
<line x1="1840.1" y1="265.1" x2="1845.9" y2="234.8" stroke="#5a5ad0" stroke-width="1.4"/>
<polygon points="1882.4,250.1 1892.4,246.5 1902.4,250.1 1902.4,261.5 1892.4,265.4 1882.4,261.5" fill="#d6cecd" stroke="#4c4848" stroke-width="0.8" stroke-linejoin="round"/>
<polyline points="1882.4,250.1 1892.4,254.4 1902.4,250.1" fill="none" stroke="#4c4848" stroke-width="0.8" stroke-linejoin="round"/>
<polyline points="1892.4,254.4 1892.4,265.4" fill="none" stroke="#4c4848" stroke-width="0.8" stroke-linejoin="round"/>
<line x1="1885.4" y1="800.8" x2="1873.5" y2="790.5" stroke="#22cc22" stroke-width="1.3"/><polygon points="1871.5,788.8 1877.5,790 1875,793.5" fill="#22cc22"/>
<line x1="1885.4" y1="800.8" x2="1899" y2="794" stroke="#cc2222" stroke-width="1.3"/><polygon points="1901.5,792.8 1895.5,793.2 1897.5,796.8" fill="#cc2222"/>
<line x1="1885.4" y1="800.8" x2="1887.8" y2="784" stroke="#2222cc" stroke-width="1.5"/><polygon points="1888.6,779.5 1885,787.5 1890.5,788" fill="#2222cc"/>
<text x="1892.5" y="778" font-family="Liberation Sans, sans-serif" font-size="9.5" fill="#000" text-anchor="middle" letter-spacing="0">Z</text>
<text x="1875.4" y="788" font-family="Liberation Sans, sans-serif" font-size="9.5" fill="#000" text-anchor="middle" letter-spacing="0">Y</text>
<text x="1904.5" y="792" font-family="Liberation Sans, sans-serif" font-size="9.5" fill="#000" text-anchor="middle" letter-spacing="0">X</text>
</g>
</svg>
<div class="a" style="left:405px;top:835px;width:1515px;height:1px;background:#f8f8f8"></div>
<div class="a" style="left:405px;top:836px;width:97px;height:28px;background:linear-gradient(#dedede,#d9d9d9);border:1px solid #c2c2c2;border-top:none;border-radius:0 0 3px 3px"></div>
<div class="a" style="left:501px;top:836px;width:571px;height:30px;background:linear-gradient(#ffffff,#f3f3f3);border:1px solid #c2c2c2;border-top:none;border-radius:0 0 3px 3px"></div>
<svg style="left:418px;top:841px" width="15" height="16" viewBox="0 0 15 16"><path d="M0.5 2.5 L2.5 0.5 H13.5 L12 3.5 H5 V6 H10 L9 9 H5 V14 L0.5 15.5 Z" fill="#e8262a"/><path d="M2.5 3 H11.5 V5.5 H6 V7 H10 V9.5 H6 V13.5 H2.5 Z" fill="#fff"/><path d="M9 5 L10.2 6.2 L11.6 5.6 L12.4 7 L14 7.2 L13.8 8.8 L15 9.8 L13.9 11 L14.3 12.5 L12.8 12.9 L12.2 14.4 L10.7 13.9 L9.5 14.9 L8.5 13.7 L7 13.8 L6.5 12.5 V9.5 H9 Z" fill="#3a8ee0"/><path d="M6 7 H10 V9.5 H6 Z" fill="#fff"/></svg>
<div class="t" style="left:437.1px;top:843px;letter-spacing:-0.042px;">Start</div>
<div class="a" style="left:471px;top:843px;width:14px;height:14px;background:#c4c4c4;border:1px solid #b0b0b0;border-radius:1px"></div>
<svg style="left:474px;top:846px" width="8" height="8" viewBox="0 0 8 8"><path d="M1 1 L7 7 M7 1 L1 7" stroke="#fff" stroke-width="1.5"/></svg>
<svg style="left:515px;top:842px" width="12" height="15" viewBox="0 0 12 15"><path d="M0.5 0.5 H8 L11.5 4 V14.5 H0.5 Z" fill="#fdfdfd" stroke="#8a8c88" stroke-width="0.8"/><path d="M8 0.5 V4 H11.5" fill="none" stroke="#8a8c88" stroke-width="0.8"/><circle cx="7.5" cy="5.2" r="2.6" fill="#e01b1b"/><path d="M2.2 7 L5 5.8 L8 7 V11 L5 12.5 L2.2 11 Z" fill="#3a6fb0" stroke="#1b3c6e" stroke-width="0.6"/><path d="M2.2 7 L5 8.3 L8 7 M5 8.3 V12.5" stroke="#1b3c6e" stroke-width="0.6" fill="none"/></svg>
<div class="t" style="left:532.8px;top:844px;letter-spacing:-0.465px;">Test_ ArchSketch_ 101j_ Wall _Slab _CurtainWall_Lite_1.0_ PropertySet-StructureSlab_r8 : 1*</div>
<div class="a" style="left:1042px;top:844px;width:14px;height:14px;background:#e8402c;border:1px solid #c02010;border-radius:1px"></div>
<svg style="left:1045px;top:847px" width="8" height="8" viewBox="0 0 8 8"><path d="M1 1 L7 7 M7 1 L1 7" stroke="#fff" stroke-width="1.5"/></svg>
<div class="a" style="left:955px;top:868px;width:13px;height:1px;background:repeating-linear-gradient(90deg,#b0b0b0 0 1px,transparent 1px 3px)"></div>
<div class="t" style="left:165.1px;top:875px;letter-spacing:-0.311px;">Selection View</div>
<svg style="left:407.5px;top:876.5px" width="12" height="12" viewBox="0 0 12 12"><rect x="0.75" y="0.75" width="10.5" height="10.5" rx="1" fill="none" stroke="#6e6e6e" stroke-width="1.3"/><path d="M1 4 H11" stroke="#6e6e6e" stroke-width="1.3"/></svg>
<svg style="left:430.5px;top:876.5px" width="12" height="12" viewBox="0 0 12 12"><rect x="3.75" y="0.75" width="7.5" height="7.5" rx="0.8" fill="none" stroke="#6e6e6e" stroke-width="1.3"/><rect x="0.75" y="3.75" width="7.5" height="7.5" rx="0.8" fill="#efefef" stroke="#6e6e6e" stroke-width="1.3"/></svg>
<svg style="left:453.5px;top:876.5px" width="12" height="12" viewBox="0 0 12 12"><path d="M0.8 0.8 L11.2 11.2 M11.2 0.8 L0.8 11.2" stroke="#555" stroke-width="1.8"/></svg>
<div class="a" style="left:0px;top:892px;width:440px;height:25px;background:#fff;border:1px solid #b8b8b8;border-radius:3px"></div>
<div class="t" style="left:3.0px;top:897px;letter-spacing:-0.761px;color:#a4a4a4;">Search</div>
<svg style="left:444px;top:897px" width="16" height="13" viewBox="0 0 16 13"><path d="M0.6 6.5 L4.5 1 H15 V12 H4.5 Z" fill="#dfe8f5" stroke="#3c6eb4" stroke-width="1.1" stroke-linejoin="round"/><path d="M6.8 3.8 L12.4 9.4 M12.4 3.8 L6.8 9.4" stroke="#6d9bd1" stroke-width="2"/></svg>
<div class="t" style="left:462px;top:897px">1</div>
<div class="a" style="left:0px;top:917px;width:469px;height:70px;background:#fff;border:1px solid #b8b8b8;overflow:hidden"><div class="t" style="left:2.9px;top:1px;letter-spacing:-0.559px;">Test__ArchSketch__101j__Wall___Slab___CurtainWall_Lite_1_0__PropertySet_StructureSlab_r8</div></div>
<div class="a" style="left:1px;top:972px;width:467px;height:14px;background:#e4e4e4;border-top:1px solid #c4c4c4"></div>
<div class="a" style="left:1px;top:972px;width:15px;height:14px;background:linear-gradient(#fdfdfd,#f0f0f0);border:1px solid #c4c4c4;border-left:none"></div>
<div class="a" style="left:453px;top:972px;width:15px;height:14px;background:linear-gradient(#fdfdfd,#f0f0f0);border:1px solid #c4c4c4;border-right:none"></div>
<div class="a" style="left:16px;top:972px;width:266px;height:14px;background:linear-gradient(#fdfdfd,#f0f0f0);border:1px solid #bcbcbc"></div>
<svg style="left:6px;top:975.5px" width="5" height="8" viewBox="0 0 5 8"><path d="M4.5 0 V7 L0.5 3.5 Z" fill="#4d4d4d"/></svg>
<svg style="left:459px;top:975.5px" width="5" height="8" viewBox="0 0 5 8"><path d="M0.5 0 V7 L4.5 3.5 Z" fill="#4d4d4d"/></svg>
<div class="a" style="left:0px;top:992px;width:14px;height:14px;background:#fff;border:1px solid #b8b8b8;border-radius:2px"></div>
<div class="t" style="left:18.7px;top:991px;letter-spacing:-0.166px;">Picked object list</div>
<div class="a" style="left:472px;top:936px;width:1px;height:13px;background:repeating-linear-gradient(#b0b0b0 0 1px,transparent 1px 3px)"></div>
<div class="a" style="left:1239px;top:936px;width:1px;height:13px;background:repeating-linear-gradient(#b0b0b0 0 1px,transparent 1px 3px)"></div>
<div class="t" style="left:782.2px;top:875px;letter-spacing:-0.252px;">Python Console</div>
<svg style="left:1174.5px;top:876.5px" width="12" height="12" viewBox="0 0 12 12"><rect x="0.75" y="0.75" width="10.5" height="10.5" rx="1" fill="none" stroke="#6e6e6e" stroke-width="1.3"/><path d="M1 4 H11" stroke="#6e6e6e" stroke-width="1.3"/></svg>
<svg style="left:1197.5px;top:876.5px" width="12" height="12" viewBox="0 0 12 12"><rect x="3.75" y="0.75" width="7.5" height="7.5" rx="0.8" fill="none" stroke="#6e6e6e" stroke-width="1.3"/><rect x="0.75" y="3.75" width="7.5" height="7.5" rx="0.8" fill="#efefef" stroke="#6e6e6e" stroke-width="1.3"/></svg>
<svg style="left:1220.5px;top:876.5px" width="12" height="12" viewBox="0 0 12 12"><path d="M0.8 0.8 L11.2 11.2 M11.2 0.8 L0.8 11.2" stroke="#555" stroke-width="1.8"/></svg>
<div class="a" style="left:475px;top:892px;width:761px;height:118px;background:#fff;border:1px solid #b0b0b0"></div>
<div class="t mono" style="left:480px;top:895px;color:#00aa00"><span style="color:#a0a0a0">&gt;&gt;&gt; </span># Gui.Selection.clearSelection()</div>
<div class="t mono" style="left:480px;top:913px;color:#00aa00"><span style="color:#a0a0a0">&gt;&gt;&gt; </span>#</div>
<div class="t mono" style="left:480px;top:931px;color:#00aa00">Gui.Selection.addSelection('Test__ArchSketch__101j__Wall___Slab___CurtainWall_Lite_1_0__Proper</div>
<div class="t mono" style="left:480px;top:949px;color:#00aa00">tySet_StructureSlab_r8','ArchSketch035')</div>
<div class="t mono" style="left:480px;top:967px;color:#00aa00"><span style="color:#a0a0a0">&gt;&gt;&gt; </span># Gui.runCommand('Std_ToggleVisibility',0)</div>
<div class="t mono" style="left:480px;top:985px;color:#00aa00"><span style="color:#a0a0a0">&gt;&gt;&gt; </span></div>
<div class="a" style="left:1221px;top:893px;width:14px;height:116px;background:#e4e4e4;border-left:1px solid #c4c4c4"></div><div class="a" style="left:1221px;top:893px;width:14px;height:15px;background:linear-gradient(90deg,#fdfdfd,#f0f0f0);border:1px solid #c4c4c4;border-top:none"></div><div class="a" style="left:1221px;top:994px;width:14px;height:15px;background:linear-gradient(90deg,#fdfdfd,#f0f0f0);border:1px solid #c4c4c4;border-bottom:none"></div><div class="a" style="left:1221px;top:968px;width:14px;height:27px;background:linear-gradient(90deg,#fdfdfd,#f0f0f0);border:1px solid #bcbcbc"></div><svg style="left:1224.5px;top:898px" width="7" height="5" viewBox="0 0 7 5"><path d="M0 4.5 L3.5 0.5 L7 4.5 Z" fill="#4d4d4d"/></svg>
<svg style="left:1224.5px;top:999px" width="7" height="5" viewBox="0 0 7 5"><path d="M0 0.5 L3.5 4.5 L7 0.5 Z" fill="#4d4d4d"/></svg>

<div class="t" style="left:1518.1px;top:875px;letter-spacing:-0.278px;">Report View</div>
<svg style="left:1858.5px;top:876.5px" width="12" height="12" viewBox="0 0 12 12"><rect x="0.75" y="0.75" width="10.5" height="10.5" rx="1" fill="none" stroke="#6e6e6e" stroke-width="1.3"/><path d="M1 4 H11" stroke="#6e6e6e" stroke-width="1.3"/></svg>
<svg style="left:1881.5px;top:876.5px" width="12" height="12" viewBox="0 0 12 12"><rect x="3.75" y="0.75" width="7.5" height="7.5" rx="0.8" fill="none" stroke="#6e6e6e" stroke-width="1.3"/><rect x="0.75" y="3.75" width="7.5" height="7.5" rx="0.8" fill="#efefef" stroke="#6e6e6e" stroke-width="1.3"/></svg>
<svg style="left:1904.5px;top:876.5px" width="12" height="12" viewBox="0 0 12 12"><path d="M0.8 0.8 L11.2 11.2 M11.2 0.8 L0.8 11.2" stroke="#555" stroke-width="1.8"/></svg>
<div class="a" style="left:1242px;top:892px;width:678px;height:118px;background:#fff;border:1px solid #b0b0b0;overflow:hidden"><div class="t mono" style="left:4px;top:-8px;color:#2e3436;white-space:pre">14:21:18  onChanged() - End</div><div class="t mono" style="left:4px;top:10px;color:#2e3436;white-space:pre">14:25:10  ArchSketch__MasterLayout  going through onBeforeChange()</div><div class="t mono" style="left:4px;top:28px;color:#2e3436;white-space:pre">14:25:10  ArchSketch035</div><div class="t mono" style="left:4px;top:46px;color:#2e3436;white-space:pre">14:25:10   : Debug: ArchSketch.onChanged Change property: Visibility</div><div class="t mono" style="left:4px;top:64px;color:#2e3436;white-space:pre">14:25:10  </div><div class="t mono" style="left:4px;top:82px;color:#2e3436;white-space:pre">14:25:10  onChanged() - End</div></div>
<div class="a" style="left:1905px;top:893px;width:14px;height:116px;background:#e4e4e4;border-left:1px solid #c4c4c4"></div><div class="a" style="left:1905px;top:893px;width:14px;height:15px;background:linear-gradient(90deg,#fdfdfd,#f0f0f0);border:1px solid #c4c4c4;border-top:none"></div><div class="a" style="left:1905px;top:994px;width:14px;height:15px;background:linear-gradient(90deg,#fdfdfd,#f0f0f0);border:1px solid #c4c4c4;border-bottom:none"></div><div class="a" style="left:1905px;top:968px;width:14px;height:27px;background:linear-gradient(90deg,#fdfdfd,#f0f0f0);border:1px solid #bcbcbc"></div><svg style="left:1908.5px;top:898px" width="7" height="5" viewBox="0 0 7 5"><path d="M0 4.5 L3.5 0.5 L7 4.5 Z" fill="#4d4d4d"/></svg>
<svg style="left:1908.5px;top:999px" width="7" height="5" viewBox="0 0 7 5"><path d="M0 0.5 L3.5 4.5 L7 0.5 Z" fill="#4d4d4d"/></svg>

<div class="t" style="left:2.0px;top:1022px;letter-spacing:-0.182px;">Touched (but must be executed), Internal name: ArchSketch035</div>
<div class="a" style="left:1650px;top:1022px;width:14px;height:13px;background:linear-gradient(#3f74b5,#2c5a96);border:1px solid #1f4a85"></div>
<div class="t" style="left:1670.5px;top:1022px">1</div>
<svg style="left:1688px;top:1027px" width="7" height="4" viewBox="0 0 7 4"><path d="M0 0 H7 L3.5 4 Z" fill="#555"/></svg>
<svg style="left:1721px;top:1022px" width="9" height="14" viewBox="0 0 9 14"><rect x="0.8" y="0.8" width="7.4" height="12.4" rx="3.5" fill="#fff" stroke="#333" stroke-width="1.2"/><path d="M4.5 3 V6" stroke="#333" stroke-width="1.2"/></svg>
<div class="t" style="left:1736.4px;top:1022px;letter-spacing:-1.977px;">CAD</div>
<svg style="left:1774px;top:1027px" width="7" height="4" viewBox="0 0 7 4"><path d="M0 0 H7 L3.5 4 Z" fill="#555"/></svg>
<div class="t" style="left:1800.1px;top:1022px;letter-spacing:-0.336px;">69.33 m x 31.94 m</div>
<svg style="left:1904px;top:1027px" width="7" height="4" viewBox="0 0 7 4"><path d="M0 0 H7 L3.5 4 Z" fill="#555"/></svg>
</body></html>
